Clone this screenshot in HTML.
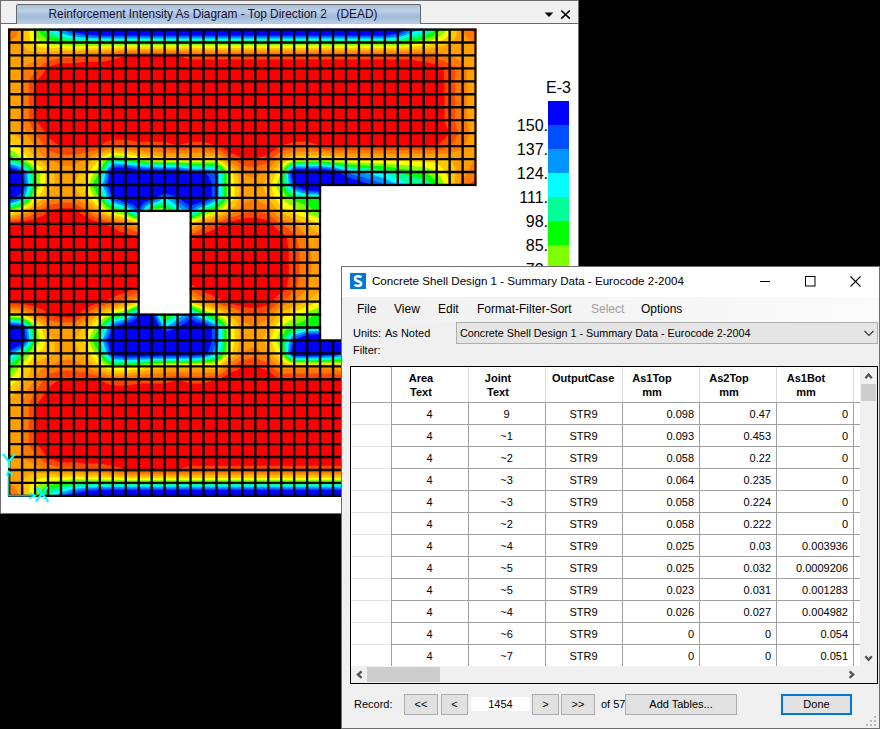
<!DOCTYPE html>
<html><head><meta charset="utf-8">
<style>
*{margin:0;padding:0;box-sizing:border-box}
html,body{width:880px;height:729px;overflow:hidden;background:#000;font-family:"Liberation Sans",sans-serif;}
.a{position:absolute;white-space:nowrap}
#w1{position:absolute;left:0;top:0;width:579px;height:514px;background:#fff;border:1px solid #6f6f6f;}
#tabbar{position:absolute;left:0;top:0;width:577px;height:23px;background:#f0f0f0;border-bottom:1px solid #6a6a6a}
#tab{position:absolute;left:15px;top:3px;width:405px;height:20px;border:1px solid #666;border-bottom:none;border-radius:2px 2px 0 0;
 background:linear-gradient(#a9c0dc 0px,#b7cbe4 4px,#bdd0e8 6px,#a7bedb 10px,#a3bbd9 12px,#b3c8e1 17px,#b6cbe3 19px)}
.tt{font-size:11.85px;color:#1a1030;letter-spacing:0}
.lg{position:absolute;right:332px;font-size:16px;color:#000;line-height:18px;white-space:nowrap}
.e3{position:absolute;left:546px;top:79px;font-size:16px;color:#000;line-height:18px}
#dlg{position:absolute;left:341px;top:266px;width:539px;height:463px;background:#f0f0f0;border:1px solid #6e6e6e;}
.t12{font-size:12px;color:#000}
.t11{font-size:11px;color:#000}
.btn{position:absolute;background:#e1e1e1;border:1px solid #adadad;font-size:12px;text-align:center;color:#000}
#tbl{position:absolute;left:350px;top:366px;width:528px;height:318px;border:1px solid #000;background:#fff;overflow:hidden}
.hc{position:absolute;top:0;height:35px;font-size:11px;font-weight:bold;text-align:center;line-height:14px;padding-top:4px}
.vl{position:absolute;width:1px;background:#a0a0a0}
.hl{position:absolute;height:1px;background:#a0a0a0}
.cell{position:absolute;font-size:11px;line-height:22px;height:22px;white-space:nowrap}
</style></head><body>
<div id="w1">
 <div id="tabbar"></div>
 <div id="tab"></div>
 <div class="a tt" style="left:47.5px;top:6px;line-height:14px">Reinforcement Intensity As Diagram - Top Direction 2&nbsp;&nbsp;&nbsp;(DEAD)</div>
 <svg class="a" style="left:540px;top:5px" width="36" height="16" viewBox="0 0 36 16">
  <path d="M3.7 6.4H12.3L8 10.9Z" fill="#000"/>
  <path d="M20.3 4.5L28.8 12.6M28.8 4.5L20.3 12.6" stroke="#000" stroke-width="1.6"/>
 </svg>
</div>
<svg style="position:absolute;left:7px;top:27px" width="472" height="472" viewBox="0 0 472 472">
<rect x="0" y="0" width="472" height="472" fill="#ff0000"/>
<path fill="#ff4600" fill-rule="evenodd" d="M0.2 0.2L0.2 196.2L4.2 196.2L4.5 195.8L14.2 194.8L25.5 192.5L32.8 190.2L36.2 188.5L38.8 186.5L41.5 183.5L53.2 181.2L67.2 181.2L71.2 183.5L72.8 185.8L75.2 187.8L84.5 192.8L87.2 193.8L99.2 196.5L102.8 199.5L109.2 202.8L113.8 204.8L122.8 207.8L130.2 209.5L157.5 209.5L163.5 212.2L164.5 212.2L169.5 213.8L183.8 213.8L187.5 211.8L190.2 209.5L192.2 208.8L196.8 206.2L200.5 205.2L208.2 201.8L208.8 201.2L212.5 199.5L216.2 196.5L217.2 196.5L223.2 194.5L224.8 194.5L226.5 193.8L229.2 193.5L230.5 192.8L233.8 192.2L234.8 191.5L248.8 190.2L261.5 193.5L265.8 196.8L268.2 200.5L270.8 203.2L274.2 205.2L279.5 209.8L280.5 216.5L281.8 221.5L281.8 249.8L279.5 261.5L275.5 265.2L270.5 268.5L268.2 270.8L265.8 274.5L261.5 277.8L248.8 281.2L234.8 279.8L231.5 278.5L223.2 276.8L216.2 274.8L211.8 271.5L202.2 266.8L199.5 266.2L197.5 265.2L196.5 265.2L193.5 263.2L190.2 261.8L187.5 259.5L183.8 257.5L169.8 257.5L161.8 259.8L157.8 261.8L130.5 261.8L125.5 263.2L124.2 263.2L111.5 267.5L102.8 271.8L99.2 274.8L94.2 275.8L92.8 276.5L89.8 276.8L84.5 278.5L80.2 281.2L75.2 283.5L71.2 287.8L67.2 290.2L52.8 290.2L41.2 287.8L37.2 283.5L31.8 280.8L28.5 280.2L24.2 278.5L15.8 276.8L0.2 276.2L0.2 471.8L471.8 471.8L471.8 0.2ZM442.8 365.2L437.5 377.5L437.5 418.2L437.2 418.5L436.5 429.8L429.8 433.5L416.5 436.8L409.8 437.5L404.2 438.8L182.8 438.8L174.8 441.2L170.8 443.2L118.5 443.2L114.5 441.2L109.2 439.5L105.2 438.8L103.5 438.2L93.2 436.8L92.8 436.5L77.2 436.5L76.8 436.2L70.8 435.8L70.5 435.5L54.2 435.5L41.2 431.5L40.2 430.8L33.8 421.5L29.2 417.2L29.2 378.2L36.8 368.2L40.8 361.5L46.5 356.5L53.8 352.2L92.8 352.2L97.2 355.5L104.8 358.5L120.5 358.5L120.8 358.2L127.2 357.5L130.8 356.5L157.8 356.5L166.2 354.2L170.2 352.2L174.2 353.8L183.2 356.5L196.8 356.5L205.8 353.8L209.2 352.2L215.8 350.2L219.5 348.2L222.5 345.5L223.5 345.5L229.2 343.5L233.2 341.2L235.5 339.2L248.5 339.2L251.8 340.8L261.2 343.5L265.5 347.5L268.5 349.5L274.2 352.2L279.8 351.8L280.2 351.5L284.5 351.5L284.8 351.2L327.8 351.2L328.2 351.5L336.8 351.8L337.2 352.2L429.8 352.2ZM29.2 54.2L33.8 49.8L36.2 46.8L39.8 40.8L41.2 39.8L53.2 36.2L66.8 36.2L67.2 35.8L70.8 35.8L71.2 35.5L74.2 35.5L74.5 35.2L77.5 35.2L77.8 34.8L93.2 34.8L93.5 34.5L97.8 34.2L108.2 32.2L115.5 29.8L118.8 28.2L170.5 28.2L173.8 29.8L182.8 32.5L404.2 32.5L409.5 33.8L417.8 34.8L430.5 38.2L436.5 41.5L437.2 53.2L437.5 53.5L437.5 93.8L440.5 101.5L442.8 106.2L429.8 119.2L312.8 119.2L308.5 117.2L300.2 114.8L287.2 114.8L278.8 117.2L272.5 119.8L266.5 123.2L261.2 127.8L252.8 130.2L248.5 132.2L235.2 132.2L232.2 129.5L227.5 127.2L222.5 125.8L218.8 122.8L214.8 120.8L209.8 119.5L208.2 118.5L201.8 116.2L196.5 114.8L183.5 114.8L178.2 116.2L173.5 117.8L171.8 118.8L170.2 119.2L166.8 117.5L157.8 114.8L130.5 114.8L126.8 113.8L120.5 113.2L120.2 112.8L105.2 112.8L98.5 115.2L95.2 117.2L92.8 119.2L53.5 119.2L47.8 115.8L40.8 109.8L37.5 104.2L29.2 93.2Z"/>
<path fill="#ff7800" fill-rule="evenodd" d="M5.5 0.2L5.5 2.8L3.8 5.2L2.2 6.8L0.2 6.8L0.2 193.8L3.8 193.8L4.2 193.5L11.2 192.5L22.8 189.2L37.2 181.2L40.8 178.5L53.8 175.8L66.8 175.8L79.8 183.5L82.8 186.8L88.2 190.2L100.2 194.2L112.2 196.5L124.2 202.8L130.8 205.2L136.5 204.8L144.2 203.2L158.2 203.2L163.2 205.2L170.5 207.2L183.8 207.5L190.2 204.5L193.8 202.2L196.5 199.8L199.2 198.8L203.2 196.5L207.5 195.8L216.2 193.5L222.8 190.8L226.2 190.2L230.8 188.5L235.5 186.2L240.8 185.5L247.2 183.8L249.5 183.8L261.2 186.8L265.2 190.5L269.2 193.5L276.2 197.8L282.5 202.8L289.5 209.8L292.5 222.8L292.5 248.5L289.5 261.5L280.2 270.5L267.8 278.8L261.2 284.5L249.5 287.5L247.2 287.5L243.8 286.5L235.5 285.2L229.8 282.5L223.8 280.5L222.8 280.5L213.8 277.2L203.2 274.8L196.5 271.5L194.2 269.5L189.5 266.5L183.5 263.8L169.5 264.5L164.5 265.8L158.2 268.2L143.8 268.2L133.8 266.2L129.8 266.5L123.5 268.8L112.2 274.8L109.2 275.2L107.5 275.8L99.2 277.5L89.8 280.5L85.2 282.8L82.5 284.8L79.8 287.8L66.8 295.5L53.5 295.5L41.8 293.2L35.2 288.8L32.5 287.8L29.8 285.8L21.8 281.8L15.2 279.8L0.2 279.2L0.2 464.5L2.2 464.5L5.5 468.5L5.5 471.8L464.2 471.8L464.2 468.8L464.5 468.2L467.8 464.8L468.5 464.5L471.8 464.5L471.8 320.2L468.5 320.2L461.8 313.5L467.2 312.5L471.8 312.5L471.8 158.8L466.8 158.8L466.5 158.5L463.8 158.5L462.2 157.8L468.8 151.2L471.8 151.2L471.8 6.8L468.2 6.8L464.5 3.2L464.2 0.2ZM451.5 365.2L449.5 373.2L447.8 377.8L447.8 429.8L446.5 431.5L442.8 434.5L437.5 437.2L429.2 440.2L414.8 443.5L408.2 443.8L407.8 444.2L182.2 444.2L181.8 444.5L177.5 444.5L177.2 444.8L172.8 444.8L172.5 445.2L116.8 445.2L116.5 444.8L107.5 444.5L107.2 444.2L103.2 444.2L102.8 443.8L99.2 443.8L98.8 443.5L95.2 443.5L94.8 443.2L79.5 443.2L77.8 442.5L67.5 440.5L53.2 440.5L41.5 437.5L36.2 434.5L31.5 429.8L28.2 425.5L24.2 421.8L21.8 417.5L21.8 377.8L22.8 375.2L26.8 366.8L32.8 358.8L36.5 352.2L40.8 347.8L53.5 343.5L67.5 343.5L73.2 344.8L79.8 345.5L84.5 347.5L89.2 348.5L93.2 348.8L94.5 349.5L105.5 352.2L119.8 352.2L120.2 351.8L132.2 350.8L132.5 350.5L155.8 350.2L156.2 349.8L159.5 349.8L159.8 349.5L168.2 348.8L168.5 348.5L172.8 348.5L173.2 348.8L175.8 348.8L176.2 349.2L178.5 349.2L181.5 349.8L199.2 349.8L199.5 349.5L207.5 349.2L210.8 348.5L216.8 345.2L220.2 342.2L222.5 339.2L229.2 336.8L235.8 332.5L240.2 332.2L248.5 330.5L254.2 333.5L261.2 335.8L268.5 343.2L273.8 346.8L279.8 346.8L280.2 346.5L327.5 346.5L329.5 347.2L335.5 347.8L335.8 348.2L338.2 348.2L338.5 348.5L430.8 348.5L431.2 348.8L432.8 348.8L436.8 349.8L442.8 352.2L446.8 356.8ZM21.8 53.8L24.5 49.2L28.8 45.2L31.5 41.5L35.8 37.2L41.5 33.8L53.5 30.8L67.8 30.8L79.8 28.2L95.5 28.2L95.8 27.8L99.2 27.8L99.5 27.5L117.5 26.5L117.8 26.2L171.8 26.2L172.2 26.5L176.5 26.5L176.8 26.8L181.2 26.8L181.5 27.2L407.5 27.2L407.8 27.5L414.5 27.8L430.2 31.5L435.8 33.5L442.2 36.5L444.2 37.8L447.8 41.5L447.8 93.5L451.5 106.2L448.8 111.5L446.8 114.5L442.5 119.5L437.2 121.5L431.2 122.8L331.2 122.8L330.8 122.5L311.2 122.2L310.8 121.8L306.5 121.8L306.2 121.5L302.5 121.5L302.2 121.2L286.2 121.2L278.8 122.8L272.8 125.2L268.2 128.5L261.2 135.5L253.5 138.2L248.5 140.8L239.8 139.2L235.5 138.8L233.8 137.2L230.2 134.8L222.5 132.2L219.8 128.8L217.2 126.5L214.2 124.5L209.8 122.5L202.8 122.2L202.5 121.8L199.2 121.8L198.8 121.5L181.8 121.5L181.5 121.8L173.5 122.5L173.2 122.8L167.8 122.8L167.5 122.5L164.8 122.5L164.5 122.2L162.2 122.2L159.2 121.5L154.5 121.5L154.2 121.2L131.5 120.8L131.2 120.5L119.5 119.5L119.2 119.2L105.5 119.2L96.5 121.2L93.2 122.5L89.5 122.8L83.5 124.2L79.8 125.8L73.5 126.5L67.8 127.8L53.5 127.8L40.8 123.5L36.5 119.2L33.8 114.2L27.8 106.2L23.5 97.8L21.8 93.5Z"/>
<path fill="#ffa000" fill-rule="evenodd" d="M12.2 0.2L11.8 3.5L9.5 8.2L7.8 10.5L2.5 15.5L0.2 15.5L0.2 191.5L3.5 191.5L10.8 189.8L20.2 186.5L25.5 183.5L28.5 181.2L35.8 177.2L41.2 173.2L52.8 170.8L67.2 170.8L79.5 178.2L85.8 184.5L89.2 186.8L93.2 188.8L105.5 192.8L117.8 195.2L122.8 196.5L131.2 200.8L132.8 200.8L136.8 199.8L143.2 197.5L144.8 196.5L157.5 196.5L162.8 199.2L170.2 201.8L183.5 203.2L186.8 201.5L193.5 196.5L196.2 195.5L201.8 194.5L210.5 192.2L226.8 185.8L230.8 183.8L232.2 182.5L234.8 177.8L235.8 176.8L247.8 170.8L248.5 170.8L252.5 174.5L257.2 177.5L260.8 179.2L264.8 184.2L272.2 190.2L274.8 191.8L287.2 196.5L289.5 198.5L300.2 209.5L302.8 219.5L304.2 222.8L304.2 248.5L303.2 250.8L300.2 261.8L287.2 274.8L274.2 279.8L267.2 285.2L263.8 288.5L261.2 292.2L259.8 292.5L254.5 295.5L248.5 300.5L247.8 300.5L235.8 294.5L234.8 293.5L234.2 291.8L230.8 287.5L227.5 285.8L222.5 284.2L219.5 282.5L212.5 279.8L194.2 275.2L187.8 270.5L183.5 268.2L170.5 269.5L162.2 272.5L157.5 274.8L144.8 274.8L141.5 273.2L135.5 271.2L131.2 270.5L124.8 273.5L123.2 274.8L103.2 279.2L92.5 282.8L88.2 285.2L85.5 287.2L79.5 293.2L67.2 300.5L52.8 300.5L41.2 298.2L38.2 295.2L34.5 292.5L16.8 283.5L14.5 282.8L0.2 281.8L0.2 455.8L2.5 455.8L7.8 460.8L9.8 463.8L12.2 468.8L12.2 471.8L455.5 471.8L455.5 468.5L457.2 464.5L458.5 462.5L462.2 458.8L464.2 457.5L468.2 455.8L471.8 455.8L471.8 339.5L468.5 339.5L466.2 336.8L463.5 331.8L461.8 326.2L455.2 319.5L452.8 313.8L453.2 313.2L456.2 312.2L468.2 311.2L468.5 310.8L471.8 310.8L471.8 160.5L467.8 160.5L467.5 160.2L455.8 159.2L452.8 157.8L453.8 154.5L455.2 151.8L461.8 145.2L463.5 139.5L466.2 134.5L468.5 131.8L471.8 131.8L471.8 15.5L467.8 15.5L463.5 13.5L460.8 11.5L458.2 8.5L455.5 3.2L455.5 0.2ZM462.2 364.5L461.5 370.5L459.5 377.8L459.5 430.2L450.8 439.2L448.8 440.5L442.2 443.5L435.8 445.2L430.5 445.5L430.2 445.8L425.8 445.8L425.5 446.2L404.2 446.5L403.8 446.8L403.5 446.5L178.8 446.5L178.5 446.8L173.2 446.8L172.8 447.2L116.5 447.2L116.2 446.8L105.2 446.5L104.8 446.2L100.2 446.2L99.8 445.8L95.5 445.8L95.2 445.5L77.8 445.5L77.5 445.2L73.8 445.2L73.5 444.8L69.8 444.8L69.5 444.5L51.5 444.5L51.2 444.2L48.2 444.2L47.8 443.8L40.5 443.2L35.2 441.5L31.8 439.8L27.8 436.5L22.8 435.2L18.8 433.2L14.8 429.8L14.8 378.2L19.2 365.2L27.8 352.5L29.2 348.8L30.5 346.5L33.8 342.8L38.8 339.8L45.8 337.5L49.8 335.5L53.8 332.8L67.2 332.8L70.5 335.2L75.2 337.5L79.8 339.2L82.2 341.2L86.8 343.8L105.2 349.2L120.8 349.2L121.2 348.8L133.2 347.8L133.5 347.5L137.2 347.5L137.5 347.2L140.8 347.2L144.2 346.5L152.8 346.2L153.2 345.8L157.2 345.8L157.5 345.5L161.5 345.5L161.8 345.2L166.2 345.2L166.5 344.8L174.8 344.8L175.2 345.2L179.5 345.2L179.8 345.5L209.8 345.5L213.8 343.2L222.8 335.2L226.8 333.5L230.8 330.8L237.2 324.5L239.2 323.2L244.2 320.8L248.5 319.8L255.2 326.5L260.8 329.2L268.2 336.8L274.2 341.8L279.8 341.8L280.2 341.5L326.2 341.5L331.2 343.2L338.8 344.8L435.2 344.8L435.5 345.2L442.8 345.5L450.2 347.2L453.5 349.2L458.5 355.5L460.8 360.2ZM433.5 261.2L433.8 260.8L434.2 261.2L433.8 261.5ZM355.5 260.8L355.8 260.5L356.2 260.8L355.8 261.2ZM459.8 260.2L460.2 259.8L460.5 260.2L460.2 260.5ZM342.5 260.2L342.8 259.8L343.2 260.2L342.8 260.5ZM393.8 259.8L394.2 259.5L394.5 259.8L394.2 260.2ZM369.5 259.8L369.8 259.5L370.2 259.8L369.8 260.2ZM368.2 259.8L368.5 259.5L368.8 259.8L368.5 260.2ZM446.2 259.5L446.5 259.2L446.8 259.5L446.5 259.8ZM393.5 259.5L393.8 259.2L394.2 259.5L393.8 259.8ZM380.5 259.5L380.8 259.2L381.2 259.5L380.8 259.8ZM367.5 259.5L367.8 259.2L368.2 259.5L367.8 259.8ZM354.5 259.5L354.8 259.2L355.2 259.5L354.8 259.8ZM459.5 259.2L459.8 258.8L460.2 259.2L459.8 259.5ZM420.8 259.2L421.2 258.8L421.5 259.2L421.2 259.5ZM405.8 259.2L406.2 258.8L406.5 259.2L406.2 259.5ZM382.2 259.2L382.5 258.8L382.8 259.2L382.5 259.5ZM460.2 258.8L460.5 258.5L460.8 258.8L460.5 259.2ZM458.8 258.8L459.2 258.5L459.5 258.8L459.2 259.2ZM457.5 258.8L457.8 258.5L458.2 258.8L457.8 259.2ZM420.5 258.8L420.8 258.5L421.2 258.8L420.8 259.2ZM419.2 258.8L419.5 258.5L419.8 258.8L419.5 259.2ZM406.5 258.8L406.8 258.5L407.2 258.8L406.8 259.2ZM395.8 258.8L396.2 258.5L396.5 258.8L396.2 259.2ZM367.5 258.8L367.8 258.5L368.2 258.8L367.8 259.2ZM356.2 258.8L356.5 258.5L356.8 258.8L356.5 259.2ZM354.8 258.8L355.2 258.5L355.5 258.8L355.2 259.2ZM340.8 258.8L341.2 258.5L341.5 258.8L341.2 259.2ZM458.5 258.5L458.8 258.2L459.2 258.5L458.8 258.8ZM457.2 258.5L457.5 258.2L457.8 258.5L457.5 258.8ZM431.2 258.5L431.5 258.2L431.8 258.5L431.5 258.8ZM419.8 258.5L420.2 258.2L420.5 258.5L420.2 258.8ZM407.5 258.5L407.8 258.2L408.2 258.5L407.8 258.8ZM406.8 258.5L407.2 258.2L407.5 258.5L407.2 258.8ZM383.2 258.5L383.5 258.2L383.8 258.5L383.5 258.8ZM380.2 258.5L380.5 258.2L380.8 258.5L380.5 258.8ZM354.2 258.5L354.5 258.2L354.8 258.5L354.5 258.8ZM341.2 258.5L341.5 258.2L341.8 258.5L341.5 258.8ZM327.5 258.5L327.8 258.2L328.2 258.5L327.8 258.8ZM458.2 258.2L458.5 257.8L458.8 258.2L458.5 258.5ZM444.2 258.2L444.5 257.8L444.8 258.2L444.5 258.5ZM434.5 258.2L434.8 257.8L435.2 258.2L434.8 258.5ZM420.5 258.2L420.8 257.8L421.2 258.2L420.8 258.5ZM418.8 258.2L419.2 257.8L419.5 258.2L419.2 258.5ZM395.2 258.2L395.5 257.8L395.8 258.2L395.5 258.5ZM392.2 258.2L392.5 257.8L392.8 258.2L392.5 258.5ZM368.5 258.2L368.8 257.8L369.2 258.2L368.8 258.5ZM366.8 258.2L367.2 257.8L367.5 258.2L367.2 258.5ZM355.8 258.2L356.2 257.8L356.5 258.2L356.2 258.5ZM354.5 258.2L354.8 257.8L355.2 258.2L354.8 258.5ZM352.8 258.2L353.2 257.8L353.5 258.2L353.2 258.5ZM459.2 257.8L459.5 257.5L459.8 257.8L459.5 258.2ZM457.8 257.8L458.2 257.5L458.5 257.8L458.2 258.2ZM456.5 257.8L456.8 257.5L457.2 257.8L456.8 258.2ZM430.2 257.8L430.5 257.5L430.8 257.8L430.5 258.2ZM422.2 257.8L422.5 257.5L422.8 257.8L422.5 258.2ZM394.5 257.8L394.8 257.5L395.2 257.8L394.8 258.2ZM393.8 257.8L394.2 257.5L394.5 257.8L394.2 258.2ZM393.2 257.8L393.5 257.5L393.8 257.8L393.5 258.2ZM391.8 257.8L392.2 257.5L392.5 257.8L392.2 258.2ZM365.5 257.8L365.8 257.5L366.2 257.8L365.8 258.2ZM330.5 257.8L330.8 257.5L331.2 257.8L330.8 258.2ZM329.8 257.8L330.2 257.5L330.5 257.8L330.2 258.2ZM329.2 257.8L329.5 257.5L329.8 258.2L329.5 258.5ZM327.8 257.8L328.2 257.5L328.5 257.8L328.2 258.2ZM446.8 257.5L447.2 257.2L447.5 257.5L447.2 257.8ZM445.2 257.5L445.5 257.2L445.8 257.5L445.5 257.8ZM443.5 257.5L443.8 257.2L444.2 257.5L443.8 257.8ZM435.2 257.5L435.5 257.2L435.8 257.5L435.5 257.8ZM430.8 257.5L431.2 257.2L431.5 257.5L431.2 257.8ZM408.5 257.5L408.8 257.2L409.2 257.5L408.8 257.8ZM407.2 257.5L407.5 257.2L407.8 257.5L407.5 257.8ZM405.5 257.5L405.8 257.2L406.2 257.5L405.8 257.8ZM391.2 257.5L391.5 257.2L391.8 257.5L391.5 257.8ZM383.5 257.5L383.8 257.2L384.2 257.5L383.8 257.8ZM370.5 257.5L370.8 257.2L371.2 257.5L370.8 257.8ZM367.5 257.5L367.8 257.2L368.2 257.5L367.8 257.8ZM354.5 257.5L354.8 257.2L355.2 257.5L354.8 257.8ZM329.5 257.5L329.8 257.2L330.2 257.5L329.8 257.8ZM446.5 257.2L446.8 256.8L447.2 257.2L446.8 257.5ZM442.8 257.2L443.2 256.8L443.5 257.2L443.2 257.5ZM432.5 257.2L432.8 256.8L433.2 257.2L432.8 257.5ZM430.2 257.2L430.5 256.8L430.8 257.2L430.5 257.5ZM416.8 257.2L417.2 256.8L417.5 257.2L417.2 257.5ZM395.5 257.2L395.8 256.8L396.2 257.2L395.8 257.5ZM392.5 257.2L392.8 256.8L393.2 257.2L392.8 257.5ZM379.2 257.2L379.5 256.8L379.8 257.2L379.5 257.5ZM378.5 257.2L378.8 256.8L379.2 257.2L378.8 257.5ZM355.5 257.2L355.8 256.8L356.2 257.2L355.8 257.5ZM344.5 257.2L344.8 256.8L345.2 257.2L344.8 257.5ZM342.2 257.2L342.5 256.8L342.8 257.2L342.5 257.5ZM341.5 257.2L341.8 256.8L342.2 257.2L341.8 257.5ZM459.5 256.8L459.8 256.5L460.2 256.8L459.8 257.2ZM458.2 256.8L458.5 256.5L458.8 256.8L458.5 257.2ZM456.8 256.8L457.2 256.5L457.5 257.2L457.2 257.5ZM455.5 256.8L455.8 256.5L456.2 256.8L455.8 257.2ZM442.5 256.8L442.8 256.5L443.2 256.8L442.8 257.2ZM434.5 256.8L434.8 256.5L435.2 256.8L434.8 257.2ZM433.2 256.8L433.5 256.5L433.8 256.8L433.5 257.2ZM431.8 256.8L432.2 256.5L432.5 256.8L432.2 257.2ZM430.5 256.8L430.8 256.5L431.2 256.8L430.8 257.2ZM417.5 256.8L417.8 256.5L418.2 256.8L417.8 257.2ZM405.5 256.8L405.8 256.5L406.2 256.8L405.8 257.2ZM404.2 256.8L404.5 256.5L404.8 256.8L404.5 257.2ZM395.8 256.8L396.2 256.5L396.5 256.8L396.2 257.2ZM391.2 256.8L391.5 256.5L391.8 256.8L391.5 257.2ZM380.5 256.8L380.8 256.5L381.2 256.8L380.8 257.2ZM366.8 256.8L367.2 256.5L367.5 256.8L367.2 257.2ZM366.2 256.8L366.5 256.5L366.8 256.8L366.5 257.2ZM343.2 256.8L343.5 256.5L343.8 256.8L343.5 257.2ZM341.8 256.8L342.2 256.5L342.5 256.8L342.2 257.2ZM341.2 256.8L341.5 256.5L341.8 256.8L341.5 257.2ZM328.8 256.8L329.2 256.5L329.5 256.8L329.2 257.2ZM457.5 256.5L457.8 256.2L458.2 256.5L457.8 256.8ZM443.2 256.5L443.5 256.2L443.8 256.5L443.5 256.8ZM434.8 256.5L435.2 256.2L435.5 256.5L435.2 256.8ZM418.8 256.5L419.2 256.2L419.5 256.5L419.2 256.8ZM406.5 256.5L406.8 256.2L407.2 256.5L406.8 256.8ZM390.5 256.5L390.8 256.2L391.2 256.5L390.8 256.8ZM380.2 256.5L380.5 256.2L380.8 256.5L380.5 256.8ZM368.8 256.5L369.2 256.2L369.5 256.5L369.2 256.8ZM365.8 256.5L366.2 256.2L366.5 256.5L366.2 256.8ZM364.8 256.5L365.2 256.2L365.5 256.8L365.2 257.2ZM352.8 256.5L353.2 256.2L353.5 256.5L353.2 256.8ZM343.5 256.5L343.8 256.2L344.2 256.5L343.8 256.8ZM340.5 256.5L340.8 256.2L341.2 256.5L340.8 256.8ZM329.2 256.5L329.5 256.2L329.8 256.5L329.5 256.8ZM326.2 256.5L326.5 256.2L326.8 256.5L326.5 256.8ZM447.5 256.2L447.8 255.8L448.2 256.2L447.8 256.5ZM444.5 256.2L444.8 255.8L445.2 256.2L444.8 256.5ZM434.2 256.2L434.5 255.8L434.8 256.2L434.5 256.5ZM430.5 256.2L430.8 255.8L431.2 256.2L430.8 256.5ZM420.2 256.2L420.5 255.8L420.8 256.2L420.5 256.5ZM417.2 256.2L417.5 255.8L417.8 256.2L417.5 256.5ZM406.8 256.2L407.2 255.8L407.5 256.2L407.2 256.5ZM403.8 256.2L404.2 255.8L404.5 256.2L404.2 256.5ZM392.8 256.2L393.2 255.8L393.5 256.2L393.2 256.5ZM382.5 256.2L382.8 255.8L383.2 256.2L382.8 256.5ZM368.5 256.2L368.8 255.8L369.2 256.2L368.8 256.5ZM365.5 256.2L365.8 255.8L366.2 256.2L365.8 256.5ZM355.2 256.2L355.5 255.8L355.8 256.2L355.5 256.5ZM352.2 256.2L352.5 255.8L352.8 256.2L352.5 256.5ZM341.8 256.2L342.2 255.8L342.5 256.2L342.2 256.5ZM341.2 256.2L341.5 255.8L341.8 256.2L341.5 256.5ZM327.8 256.2L328.2 255.8L328.5 256.2L328.2 256.5ZM458.8 255.8L459.2 255.5L459.5 255.8L459.2 256.2ZM457.8 255.8L458.2 255.5L458.5 255.8L458.2 256.2ZM445.8 255.8L446.2 255.5L446.5 255.8L446.2 256.2ZM444.8 255.8L445.2 255.5L445.5 255.8L445.2 256.2ZM434.5 255.8L434.8 255.5L435.2 255.8L434.8 256.2ZM421.5 255.8L421.8 255.5L422.2 255.8L421.8 256.2ZM416.5 255.8L416.8 255.5L417.2 256.2L416.8 256.5ZM406.5 255.8L406.8 255.5L407.2 255.8L406.8 256.2ZM403.5 255.8L403.8 255.5L404.2 255.8L403.8 256.2ZM394.2 255.8L394.5 255.5L394.8 255.8L394.5 256.2ZM391.2 255.8L391.5 255.5L392.2 255.8L391.8 256.2ZM368.8 255.8L369.2 255.5L369.5 255.8L369.2 256.2ZM365.8 255.8L366.2 255.5L366.5 255.8L366.2 256.2ZM353.8 255.8L354.2 255.5L354.5 255.8L354.2 256.2ZM342.5 255.8L342.8 255.5L343.2 255.8L342.8 256.2ZM329.5 255.8L329.8 255.5L330.2 255.8L329.8 256.2ZM446.5 255.5L446.8 255.2L447.2 255.5L446.8 255.8ZM445.2 255.5L445.5 255.2L445.8 255.5L445.5 255.8ZM443.8 255.5L444.2 255.2L444.5 255.5L444.2 255.8ZM442.8 255.5L443.2 255.2L443.5 255.5L443.2 255.8ZM420.5 255.5L420.8 255.2L421.2 255.5L420.8 255.8ZM419.2 255.5L419.5 255.2L419.8 255.5L419.5 255.8ZM403.8 255.5L404.2 255.2L404.5 255.5L404.2 255.8ZM392.2 255.5L392.5 255.2L392.8 255.5L392.5 255.8ZM390.8 255.5L391.2 255.2L391.5 255.5L391.2 255.8ZM380.2 255.5L380.5 255.2L380.8 255.5L380.5 255.8ZM368.5 255.5L368.8 255.2L369.2 255.5L368.8 255.8ZM367.2 255.5L367.5 255.2L367.8 255.5L367.5 255.8ZM338.8 255.5L339.2 255.2L339.5 255.5L339.2 255.8ZM327.2 255.5L327.5 255.2L327.8 255.5L327.5 255.8ZM325.8 255.5L326.2 255.2L326.5 255.5L326.2 255.8ZM459.5 255.2L459.8 254.8L460.2 255.2L459.8 255.5ZM444.2 255.2L444.5 254.8L444.8 255.2L444.5 255.5ZM432.8 255.2L433.2 254.8L433.5 255.2L433.2 255.5ZM430.2 255.2L430.5 254.8L430.8 255.2L430.5 255.5ZM417.5 255.2L417.8 254.8L418.2 255.2L417.8 255.5ZM406.5 255.2L406.8 254.8L407.2 255.2L406.8 255.5ZM393.8 255.2L394.2 254.8L394.5 255.2L394.2 255.5ZM392.5 255.2L392.8 254.8L393.2 255.2L392.8 255.5ZM379.8 255.2L380.2 254.8L380.5 255.2L380.2 255.5ZM378.5 255.2L378.8 254.8L379.2 255.2L378.8 255.5ZM365.8 255.2L366.2 254.8L366.5 255.2L366.2 255.5ZM354.8 255.2L355.2 254.8L355.5 255.2L355.2 255.5ZM353.5 255.2L353.8 254.8L354.2 255.2L353.8 255.5ZM342.2 255.2L342.5 254.8L342.8 255.2L342.5 255.5ZM340.8 255.2L341.2 254.8L341.5 255.2L341.2 255.5ZM339.5 255.2L339.8 254.8L340.2 255.2L339.8 255.5ZM326.8 255.2L327.2 254.8L327.5 255.2L327.2 255.5ZM458.5 254.8L458.8 254.5L459.2 254.8L458.8 255.2ZM445.5 254.8L445.8 254.5L446.2 255.2L445.8 255.5ZM443.8 254.8L444.2 254.5L444.5 254.8L444.2 255.2ZM432.5 254.8L432.8 254.5L433.2 254.8L432.8 255.2ZM430.8 254.8L431.2 254.5L431.5 254.8L431.2 255.2ZM418.8 254.8L419.2 254.5L419.5 254.8L419.2 255.2ZM417.8 254.8L418.2 254.5L418.5 254.8L418.2 255.2ZM405.8 254.8L406.2 254.5L406.5 254.8L406.2 255.2ZM404.5 254.8L404.8 254.5L405.2 254.8L404.8 255.2ZM390.8 254.8L391.2 254.5L391.5 254.8L391.2 255.2ZM379.5 254.8L379.8 254.5L380.2 254.8L379.8 255.2ZM377.8 254.8L378.2 254.5L378.5 254.8L378.2 255.2ZM455.5 254.5L455.8 254.2L456.2 254.5L455.8 254.8ZM433.2 254.5L433.5 254.2L433.8 254.5L433.5 254.8ZM429.5 254.5L429.8 254.2L430.2 254.5L429.8 254.8ZM419.5 254.5L419.8 254.2L420.2 254.5L419.8 254.8ZM418.2 254.5L418.5 254.2L418.8 254.5L418.5 254.8ZM406.5 254.5L406.8 254.2L407.2 254.5L406.8 254.8ZM405.2 254.5L405.5 254.2L405.8 254.5L405.5 254.8ZM393.8 254.5L394.2 254.2L394.5 254.5L394.2 254.8ZM380.8 254.5L381.2 254.2L381.5 254.5L381.2 254.8ZM366.5 254.5L366.8 254.2L367.2 254.8L366.8 255.2ZM365.8 254.5L366.2 254.2L366.5 254.5L366.2 254.8ZM353.5 254.5L353.8 254.2L354.2 254.5L353.8 254.8ZM352.8 254.5L353.2 254.2L353.5 254.5L353.2 254.8ZM329.2 254.5L329.5 254.2L329.8 254.8L329.5 255.2ZM457.5 253.8L457.8 254.2L457.2 255.2L456.8 254.2ZM447.2 254.2L447.5 253.8L447.8 254.2L447.5 254.5ZM442.5 254.2L442.8 253.8L443.2 254.2L442.8 254.5ZM404.5 254.2L404.8 253.8L405.2 254.2L404.8 254.5ZM395.2 254.2L395.5 253.8L395.8 254.2L395.5 254.5ZM390.8 254.2L391.2 253.8L391.5 254.2L391.2 254.5ZM367.2 254.2L367.5 253.8L367.8 254.2L367.5 254.5ZM352.5 254.2L352.8 253.8L353.2 254.2L352.8 254.5ZM418.5 253.8L418.8 253.5L419.5 254.2L418.8 254.5ZM395.5 253.8L395.8 253.5L396.2 253.8L395.8 254.2ZM391.2 253.8L391.5 253.5L391.8 253.8L391.5 254.2ZM381.8 253.8L382.2 253.5L382.5 253.8L382.2 254.2ZM366.2 253.8L366.5 253.5L366.8 253.8L366.5 254.2ZM353.2 253.8L353.5 253.5L353.8 254.2L353.5 254.5ZM338.8 253.8L339.2 253.5L339.5 253.8L339.2 254.2ZM328.2 253.8L328.5 253.5L328.8 253.8L328.5 254.2ZM460.8 253.5L461.2 253.2L461.5 253.5L461.2 253.8ZM455.8 253.5L456.2 253.2L456.5 253.5L456.2 253.8ZM443.5 253.5L443.8 253.2L444.2 253.8L443.8 254.2ZM417.5 253.5L417.8 253.2L418.2 253.5L417.8 253.8ZM407.5 253.5L407.8 253.2L408.2 253.5L407.8 253.8ZM403.8 253.5L404.2 253.2L404.5 253.5L404.2 253.8ZM380.2 253.5L380.5 253.2L380.8 253.5L380.5 253.8ZM367.2 253.5L367.5 253.2L367.8 253.5L367.5 253.8ZM340.5 253.5L340.8 253.2L341.2 253.5L340.8 253.8ZM339.8 253.5L340.2 253.2L340.5 253.5L340.2 253.8ZM331.2 253.5L331.5 253.2L331.8 253.5L331.5 253.8ZM326.8 253.5L327.2 253.2L327.5 253.5L327.2 253.8ZM434.8 253.2L435.2 252.8L435.5 253.2L435.2 253.5ZM430.2 252.8L430.5 253.2L430.2 254.2L429.8 253.8ZM406.2 253.2L406.5 252.8L406.8 253.2L406.5 253.5ZM379.2 253.2L379.5 252.8L379.8 253.2L379.5 253.5ZM378.2 253.2L378.5 252.8L378.8 253.2L378.5 253.5ZM369.8 253.2L370.2 252.8L370.5 253.2L370.2 253.5ZM364.8 253.2L365.2 252.8L365.5 253.2L365.2 253.5ZM355.5 253.2L355.8 252.8L356.2 253.2L355.8 253.5ZM341.2 253.2L341.5 252.8L341.8 253.2L341.5 253.5ZM327.5 253.2L327.8 252.8L328.2 253.2L327.8 253.5ZM460.8 252.8L461.2 252.5L461.5 252.8L461.2 253.2ZM457.8 252.8L458.2 252.5L458.5 252.8L458.2 253.2ZM421.5 252.8L421.8 252.5L422.2 252.8L421.8 253.2ZM407.2 252.8L407.5 252.5L407.8 252.8L407.5 253.2ZM377.8 252.8L378.2 252.5L378.5 252.8L378.2 253.2ZM367.8 252.8L368.2 252.5L368.5 252.8L368.2 253.2ZM357.8 252.8L358.2 252.5L358.5 252.8L358.2 253.2ZM341.5 252.8L341.8 252.5L342.2 252.8L341.8 253.2ZM331.5 252.8L331.8 252.5L332.2 252.8L331.8 253.2ZM327.2 252.8L327.5 252.5L327.8 252.8L327.5 253.2ZM326.5 252.8L326.8 252.5L327.2 252.8L326.8 253.2ZM447.5 252.5L447.8 252.2L448.2 252.5L447.8 252.8ZM405.5 252.5L405.8 252.2L406.2 252.5L405.8 252.8ZM393.8 252.5L394.2 252.2L394.5 252.5L394.2 252.8ZM353.5 252.5L353.8 252.2L354.2 252.5L353.8 252.8ZM341.8 252.5L342.2 252.2L342.5 252.5L342.2 252.8ZM341.2 252.5L341.5 252.2L341.8 252.5L341.5 252.8ZM459.8 252.2L460.2 251.8L460.5 252.2L460.2 252.5ZM455.8 252.2L456.2 251.8L456.5 252.2L456.2 252.5ZM431.2 252.2L431.5 251.8L431.8 252.2L431.5 252.5ZM403.5 252.2L403.8 251.8L404.2 252.2L403.8 252.5ZM394.5 252.2L394.8 251.8L395.2 252.2L394.8 252.5ZM381.2 252.2L381.5 251.8L381.8 252.2L381.5 252.5ZM367.8 252.2L368.2 251.8L368.5 252.2L368.2 252.5ZM352.5 252.2L352.8 251.8L353.2 252.2L352.8 252.5ZM339.2 252.2L339.5 251.8L339.8 252.2L339.5 252.5ZM330.2 252.2L330.5 251.8L330.8 252.2L330.5 252.5ZM458.8 251.8L459.2 251.5L459.5 252.2L459.2 252.5ZM443.8 251.8L444.2 251.5L444.5 251.8L444.2 252.2ZM433.2 251.8L433.5 251.5L433.8 251.8L433.5 252.2ZM418.2 251.8L418.5 251.5L418.8 251.8L418.5 252.2ZM407.5 251.8L407.8 251.5L408.2 251.8L407.8 252.2ZM392.5 251.8L392.8 251.5L393.2 251.8L392.8 252.2ZM341.2 251.8L341.5 251.5L341.8 251.8L341.5 252.2ZM326.2 251.8L326.5 251.5L326.8 251.8L326.5 252.2ZM431.8 251.5L432.2 251.2L432.5 251.5L432.2 251.8ZM430.8 251.5L431.2 251.2L431.5 251.5L431.2 251.8ZM403.5 251.5L403.8 251.2L404.2 251.5L403.8 251.8ZM390.5 251.5L390.8 251.2L391.2 251.5L390.8 251.8ZM380.2 251.5L380.5 251.2L380.8 251.5L380.5 251.8ZM378.2 251.5L378.5 251.2L378.8 251.5L378.5 251.8ZM367.2 251.5L367.5 251.2L367.8 251.5L367.5 251.8ZM405.2 251.2L405.5 250.8L405.8 251.2L405.5 251.5ZM392.2 251.2L392.5 250.8L392.8 251.2L392.5 251.5ZM379.2 251.2L379.5 250.8L379.8 251.2L379.5 251.5ZM364.8 251.2L365.2 250.8L365.5 251.2L365.2 251.5ZM352.2 250.8L352.5 251.2L352.2 252.2L351.8 251.8ZM338.8 251.2L339.2 250.8L339.5 251.2L339.2 251.5ZM456.2 250.8L456.5 250.5L456.8 250.8L456.5 251.2ZM403.5 250.8L403.8 250.5L404.2 250.8L403.8 251.2ZM330.2 250.8L330.5 250.5L330.8 250.8L330.5 251.2ZM418.8 250.5L419.2 250.2L419.5 250.5L419.2 250.8ZM407.8 250.5L408.2 250.2L408.5 250.5L408.2 250.8ZM404.8 250.5L405.2 250.2L405.5 250.5L405.2 250.8ZM393.8 250.5L394.2 250.2L394.5 250.5L394.2 250.8ZM391.5 250.5L391.8 250.2L392.2 250.5L391.8 250.8ZM380.5 250.5L380.8 250.2L381.2 250.5L380.8 250.8ZM456.8 250.2L457.2 249.8L457.5 250.2L457.2 250.5ZM430.2 249.8L430.5 250.2L430.2 251.2L429.8 250.8ZM379.5 250.2L379.8 249.8L380.2 250.2L379.8 250.5ZM352.5 250.2L352.8 249.8L353.2 250.2L352.8 250.5ZM442.8 249.8L443.2 249.5L443.5 249.8L443.2 250.2ZM403.8 249.8L404.2 249.5L404.5 249.8L404.2 250.2ZM378.2 249.8L378.5 249.5L378.8 249.8L378.5 250.2ZM380.2 249.5L380.5 249.2L380.8 249.5L380.5 249.8ZM443.8 248.8L444.2 248.5L444.5 248.8L444.2 249.2ZM407.8 248.2L408.2 247.8L408.5 248.2L408.2 248.5ZM381.8 247.8L382.2 247.5L382.5 247.8L382.2 248.2ZM356.2 247.8L356.5 247.5L356.8 247.8L356.5 248.2ZM381.5 247.5L381.8 247.2L382.2 247.5L381.8 247.8ZM368.8 247.5L369.2 247.2L369.5 247.5L369.2 247.8ZM343.2 247.5L343.5 247.2L343.8 247.5L343.5 247.8ZM395.2 247.2L395.5 246.8L395.8 247.2L395.5 247.5ZM393.8 247.2L394.2 246.8L394.5 247.2L394.2 247.5ZM330.2 247.2L330.5 246.8L330.8 247.2L330.5 247.5ZM459.8 246.8L460.2 246.5L460.5 246.8L460.2 247.2ZM446.5 246.8L446.8 246.5L447.2 246.8L446.8 247.2ZM434.2 246.8L434.5 246.5L434.8 246.8L434.5 247.2ZM406.8 246.8L407.2 246.5L407.5 246.8L407.2 247.2ZM343.5 246.8L343.8 246.5L344.2 246.8L343.8 247.2ZM446.2 246.5L446.5 246.2L446.8 246.5L446.5 246.8ZM433.2 246.5L433.5 246.2L433.8 246.5L433.5 246.8ZM393.8 246.5L394.2 246.2L394.5 246.5L394.2 246.8ZM367.5 246.5L367.8 246.2L368.2 246.5L367.8 246.8ZM354.5 246.5L354.8 246.2L355.2 246.5L354.8 246.8ZM434.5 246.2L434.8 245.8L435.2 246.2L434.8 246.5ZM393.2 246.2L393.5 245.8L393.8 246.2L393.5 246.5ZM381.2 246.2L381.5 245.8L381.8 246.2L381.5 246.5ZM355.2 246.2L355.5 245.8L355.8 246.2L355.5 246.5ZM343.2 246.2L343.5 245.8L343.8 246.2L343.5 246.5ZM433.5 245.8L433.8 245.5L434.2 246.2L433.8 246.5ZM432.5 245.8L432.8 245.5L433.2 245.8L432.8 246.2ZM420.2 245.8L420.5 245.5L420.8 245.8L420.5 246.2ZM419.2 245.8L419.5 245.5L419.8 245.8L419.5 246.2ZM368.5 245.8L368.8 245.5L369.2 245.8L368.8 246.2ZM367.8 245.8L368.2 245.5L368.5 245.8L368.2 246.2ZM460.2 245.5L460.5 245.2L460.8 245.5L460.5 245.8ZM447.2 245.5L447.5 245.2L447.8 245.5L447.5 245.8ZM395.2 245.5L395.5 245.2L395.8 245.5L395.5 245.8ZM379.2 245.5L379.5 245.2L379.8 245.5L379.5 245.8ZM369.2 245.5L369.5 245.2L369.8 245.5L369.5 245.8ZM330.2 245.5L330.5 245.2L330.8 245.5L330.5 245.8ZM460.8 245.2L461.2 244.8L461.5 245.2L461.2 245.5ZM456.8 245.2L457.2 244.8L457.8 245.5L457.2 245.8ZM444.8 245.2L445.2 244.8L445.5 245.2L445.2 245.5ZM432.5 245.2L432.8 244.8L433.2 245.2L432.8 245.5ZM421.5 245.2L421.8 244.8L422.2 245.2L421.8 245.5ZM408.8 245.2L409.2 244.8L409.5 245.2L409.2 245.5ZM404.8 245.2L405.2 244.8L405.5 245.2L405.2 245.5ZM393.2 245.2L393.5 244.8L393.8 245.2L393.5 245.5ZM381.5 245.2L381.8 244.8L382.2 245.2L381.8 245.5ZM378.8 245.2L379.2 244.8L379.5 245.2L379.2 245.5ZM367.8 245.2L368.2 244.8L368.5 245.2L368.2 245.5ZM356.2 245.2L356.5 244.8L356.8 245.2L356.5 245.5ZM344.5 245.2L344.8 244.8L345.2 245.2L344.8 245.5ZM340.5 245.2L340.8 244.8L341.2 245.2L340.8 245.5ZM327.8 245.2L328.2 244.8L328.5 245.2L328.2 245.5ZM457.2 244.8L457.5 244.5L457.8 244.8L457.5 245.2ZM446.2 244.8L446.5 244.5L446.8 244.8L446.5 245.2ZM443.8 244.8L444.2 244.5L444.5 244.8L444.2 245.2ZM419.5 244.8L419.8 244.5L420.2 244.8L419.8 245.2ZM404.5 244.8L404.8 244.5L405.2 244.8L404.8 245.2ZM378.5 244.8L378.8 244.5L379.2 244.8L378.8 245.2ZM355.2 244.8L355.5 244.5L355.8 244.8L355.5 245.2ZM340.2 244.8L340.5 244.5L340.8 244.8L340.5 245.2ZM331.8 244.8L332.2 244.5L332.5 244.8L332.2 245.2ZM460.8 244.5L461.2 244.2L461.5 244.5L461.2 244.8ZM445.2 244.5L445.5 244.2L445.8 244.5L445.5 244.8ZM435.5 244.5L435.8 244.2L436.2 244.5L435.8 244.8ZM431.5 244.5L431.8 244.2L432.5 244.5L432.2 244.8ZM419.8 244.5L420.2 244.2L420.5 244.5L420.2 244.8ZM406.2 244.5L406.5 244.2L406.8 244.8L406.5 245.2ZM396.5 244.5L396.8 244.2L397.2 244.5L396.8 244.8ZM383.8 244.5L384.2 244.2L384.5 244.5L384.2 244.8ZM367.5 244.5L367.8 244.2L368.2 244.5L367.8 244.8ZM354.8 244.5L355.2 244.2L355.5 244.5L355.2 244.8ZM342.2 244.5L342.5 244.2L342.8 244.5L342.5 244.8ZM446.2 244.2L446.5 243.8L446.8 244.2L446.5 244.5ZM435.2 244.2L435.5 243.8L435.8 244.2L435.5 244.5ZM431.2 244.2L431.5 243.8L431.8 244.2L431.5 244.5ZM420.2 244.2L420.5 243.8L420.8 244.2L420.5 244.5ZM409.2 244.2L409.5 243.8L409.8 244.2L409.5 244.5ZM408.5 244.2L408.8 243.8L409.2 244.2L408.8 244.5ZM404.5 244.2L404.8 243.8L405.2 244.2L404.8 244.5ZM393.5 244.2L393.8 243.8L394.5 244.5L393.8 244.8ZM382.5 244.2L382.8 243.8L383.2 244.2L382.8 244.5ZM355.8 244.2L356.2 243.8L356.5 244.2L356.2 244.5ZM351.8 244.2L352.2 243.8L352.5 244.2L352.2 244.5ZM340.8 244.2L341.2 243.8L341.5 244.2L341.2 244.5ZM340.2 244.2L340.5 243.8L340.8 244.2L340.5 244.5ZM331.5 244.2L331.8 243.8L332.2 244.2L331.8 244.5ZM329.8 244.2L330.2 243.8L330.5 244.2L330.2 244.5ZM327.5 244.2L327.8 243.8L328.2 244.2L327.8 244.5ZM460.8 243.8L461.2 243.5L461.5 243.8L461.2 244.2ZM458.5 243.8L458.8 243.5L459.2 243.8L458.8 244.2ZM457.5 243.8L457.8 243.5L458.2 243.8L457.8 244.2ZM447.5 243.8L447.8 243.5L448.2 243.8L447.8 244.2ZM444.2 243.8L444.5 243.5L444.8 243.8L444.5 244.2ZM433.2 243.8L433.5 243.5L433.8 243.8L433.5 244.2ZM418.8 243.8L419.2 243.5L419.5 243.8L419.2 244.2ZM405.5 243.8L405.8 243.5L406.2 243.8L405.8 244.2ZM394.5 243.8L394.8 243.5L395.2 243.8L394.8 244.2ZM392.8 243.8L393.2 243.5L393.5 243.8L393.2 244.2ZM391.2 243.8L391.5 243.5L391.8 243.8L391.5 244.2ZM390.5 243.8L390.8 243.5L391.2 243.8L390.8 244.2ZM379.5 243.8L379.8 243.5L380.2 243.8L379.8 244.2ZM368.5 243.8L368.8 243.5L369.2 243.8L368.8 244.2ZM365.2 243.8L365.5 243.5L365.8 244.2L365.5 244.5ZM353.5 243.8L353.8 243.5L354.2 244.2L353.8 244.5ZM342.5 243.8L342.8 243.5L343.2 243.8L342.8 244.2ZM339.2 243.8L339.5 243.5L339.8 243.8L339.5 244.2ZM455.5 243.5L455.8 243.2L456.2 243.5L455.8 243.8ZM446.8 243.5L447.2 243.2L447.5 243.5L447.2 243.8ZM433.5 243.5L433.8 243.2L434.2 243.5L433.8 243.8ZM421.2 243.5L421.5 243.2L421.8 243.5L421.5 243.8ZM417.5 243.5L417.8 243.2L418.2 243.5L417.8 243.8ZM416.5 243.5L416.8 243.2L417.2 243.8L416.8 244.2ZM407.8 243.5L408.2 243.2L408.5 243.5L408.2 243.8ZM404.8 243.5L405.2 243.2L405.5 243.5L405.2 243.8ZM404.2 243.5L404.5 243.2L404.8 243.5L404.5 243.8ZM391.8 243.5L392.2 243.2L392.5 243.5L392.2 243.8ZM382.2 243.5L382.5 243.2L382.8 243.5L382.5 243.8ZM381.5 243.5L381.8 243.2L382.2 243.5L381.8 243.8ZM379.2 243.5L379.5 243.2L379.8 243.5L379.5 243.8ZM378.5 243.5L378.8 243.2L379.2 243.5L378.8 243.8ZM366.8 243.5L367.2 243.2L367.5 243.5L367.2 243.8ZM356.5 243.5L356.8 243.2L357.2 243.5L356.8 243.8ZM340.2 243.5L340.5 243.2L340.8 243.5L340.5 243.8ZM327.8 243.5L328.2 243.2L328.5 243.5L328.2 243.8ZM460.5 243.2L460.8 242.8L461.2 243.2L460.8 243.5ZM456.5 243.2L456.8 242.8L457.2 243.2L456.8 243.5ZM443.5 242.8L443.8 243.2L443.5 244.2L443.2 243.8ZM432.2 243.2L432.5 242.8L432.8 243.2L432.5 243.5ZM431.5 243.2L431.8 242.8L432.2 243.2L431.8 243.5ZM430.2 242.8L430.5 243.2L430.2 244.2L429.8 243.8ZM420.5 243.2L420.8 242.8L421.2 243.2L420.8 243.5ZM378.2 243.2L378.5 242.8L378.8 243.2L378.5 243.5ZM364.8 243.2L365.2 242.8L365.5 243.2L365.2 243.5ZM353.8 243.2L354.2 242.8L354.5 243.2L354.2 243.5ZM458.8 242.8L459.2 242.5L459.5 243.2L459.2 243.5ZM418.2 242.8L418.5 242.5L418.8 242.8L418.5 243.2ZM407.2 242.8L407.5 242.5L407.8 242.8L407.5 243.2ZM406.5 242.8L406.8 242.5L407.2 242.8L406.8 243.2ZM403.8 242.8L404.2 242.5L404.5 242.8L404.2 243.2ZM395.5 242.8L395.8 242.5L396.2 242.8L395.8 243.2ZM392.2 242.8L392.5 242.5L392.8 242.8L392.5 243.2ZM391.5 242.8L391.8 242.5L392.2 243.2L391.8 243.5ZM381.2 242.8L381.5 242.5L381.8 242.8L381.5 243.2ZM380.5 242.8L380.8 242.5L381.2 242.8L380.8 243.2ZM338.8 242.8L339.2 242.5L339.5 242.8L339.2 243.2ZM327.2 242.8L327.5 242.5L327.8 242.8L327.5 243.2ZM326.5 242.8L326.8 242.5L327.2 243.2L326.8 243.5ZM458.5 242.5L458.8 242.2L459.2 242.5L458.8 242.8ZM457.2 242.5L457.5 242.2L457.8 242.5L457.5 242.8ZM446.2 242.5L446.5 242.2L446.8 242.5L446.5 242.8ZM444.8 242.5L445.2 242.2L445.5 242.5L445.2 242.8ZM433.8 242.5L434.2 242.2L434.5 242.5L434.2 242.8ZM420.5 242.5L420.8 242.2L421.2 242.5L420.8 242.8ZM405.2 242.5L405.5 242.2L405.8 242.5L405.5 242.8ZM393.8 242.5L394.2 242.2L394.5 242.5L394.2 242.8ZM377.8 242.5L378.2 242.2L378.5 242.5L378.2 242.8ZM367.5 242.5L367.8 242.2L368.2 242.5L367.8 242.8ZM355.2 242.5L355.5 242.2L355.8 242.5L355.5 242.8ZM352.2 242.5L352.5 242.2L352.8 242.5L352.5 242.8ZM342.8 242.5L343.2 242.2L343.5 242.5L343.2 242.8ZM339.8 242.5L340.2 242.2L340.5 242.5L340.2 242.8ZM339.2 242.5L339.5 242.2L339.8 242.5L339.5 242.8ZM329.5 242.5L329.8 242.2L330.2 242.5L329.8 242.8ZM326.8 242.5L327.2 242.2L327.5 242.5L327.2 242.8ZM457.5 242.2L457.8 241.8L458.2 242.2L457.8 242.5ZM446.5 242.2L446.8 241.8L447.2 242.2L446.8 242.5ZM444.2 242.2L444.5 241.8L444.8 242.2L444.5 242.5ZM432.5 242.2L432.8 241.8L433.2 242.2L432.8 242.5ZM419.2 242.2L419.5 241.8L419.8 242.2L419.5 242.5ZM416.8 242.2L417.2 241.8L417.5 242.2L417.2 242.5ZM403.5 242.2L403.8 241.8L404.2 242.2L403.8 242.5ZM394.2 242.2L394.5 241.8L394.8 242.2L394.5 242.5ZM391.8 242.2L392.2 241.8L392.5 242.2L392.2 242.5ZM378.5 242.2L378.8 241.8L379.2 242.2L378.8 242.5ZM366.8 242.2L367.2 241.8L367.5 242.2L367.2 242.5ZM341.8 242.2L342.2 241.8L342.5 242.2L342.2 242.5ZM328.5 242.2L328.8 241.8L329.2 242.2L328.8 242.5ZM457.2 241.8L457.5 241.5L457.8 241.8L457.5 242.2ZM443.8 241.8L444.2 241.5L444.5 241.8L444.2 242.2ZM431.5 241.8L431.8 241.5L432.2 241.8L431.8 242.2ZM430.8 241.8L431.2 241.5L431.5 241.8L431.2 242.2ZM419.8 241.8L420.2 241.5L420.5 241.8L420.2 242.2ZM417.5 241.8L417.8 241.5L418.2 241.8L417.8 242.2ZM404.2 241.8L404.5 241.5L404.8 241.8L404.5 242.2ZM381.5 241.8L381.8 241.5L382.2 241.8L381.8 242.2ZM380.2 241.8L380.5 241.5L380.8 241.8L380.5 242.2ZM365.2 241.8L365.5 241.5L365.8 241.8L365.5 242.2ZM355.8 241.8L356.2 241.5L356.5 242.2L356.2 242.5ZM353.5 241.8L353.8 241.5L354.2 242.2L353.8 242.5ZM342.5 241.8L342.8 241.5L343.2 241.8L342.8 242.2ZM327.8 241.8L328.2 241.5L328.5 241.8L328.2 242.2ZM326.2 241.8L326.5 241.5L326.8 242.2L326.5 242.5ZM431.8 241.5L432.2 241.2L432.5 241.5L432.2 241.8ZM430.2 241.5L430.5 241.2L430.8 241.5L430.5 241.8ZM419.5 241.5L419.8 241.2L420.2 241.5L419.8 241.8ZM418.5 241.5L418.8 241.2L419.2 241.5L418.8 241.8ZM417.8 241.5L418.2 241.2L418.5 241.5L418.2 241.8ZM416.8 241.5L417.2 241.2L417.5 241.5L417.2 241.8ZM406.5 241.5L406.8 241.2L407.2 241.5L406.8 241.8ZM403.5 241.5L403.8 241.2L404.2 241.5L403.8 241.8ZM394.2 241.5L394.5 241.2L394.8 241.5L394.5 241.8ZM390.5 241.5L390.8 241.2L391.2 241.5L390.8 241.8ZM379.2 241.5L379.5 241.2L379.8 241.5L379.5 241.8ZM378.2 241.5L378.5 241.2L378.8 241.5L378.5 241.8ZM366.2 241.5L366.5 241.2L366.8 241.5L366.5 241.8ZM353.8 241.5L354.2 241.2L354.5 241.5L354.2 241.8ZM341.8 241.5L342.2 241.2L342.5 241.5L342.2 241.8ZM338.8 241.5L339.2 241.2L339.5 241.5L339.2 241.8ZM328.5 241.5L328.8 241.2L329.2 241.5L328.8 241.8ZM431.2 241.2L431.5 240.8L431.8 241.2L431.5 241.5ZM429.5 241.2L429.8 240.8L430.2 241.2L429.8 241.5ZM406.2 241.2L406.5 240.8L406.8 241.2L406.5 241.5ZM392.2 241.2L392.5 240.8L392.8 241.2L392.5 241.5ZM369.5 241.2L369.8 240.8L370.2 241.2L369.8 241.5ZM367.2 241.2L367.5 240.8L367.8 241.2L367.5 241.5ZM364.8 241.2L365.2 240.8L365.5 241.2L365.2 241.5ZM355.5 241.2L355.8 240.8L356.2 241.2L355.8 241.5ZM353.2 241.2L353.5 240.8L353.8 241.2L353.5 241.5ZM325.8 241.2L326.2 240.8L326.5 241.5L326.2 241.8ZM456.2 240.8L456.5 240.5L456.8 241.2L456.5 241.5ZM416.5 240.8L416.8 240.5L417.5 240.8L417.2 241.2ZM405.2 240.8L405.5 240.5L405.8 240.8L405.5 241.2ZM403.5 240.8L403.8 240.5L404.5 240.8L404.2 241.2ZM381.2 240.8L381.5 240.5L381.8 240.8L381.5 241.2ZM341.5 240.8L341.8 240.5L342.2 240.8L341.8 241.2ZM326.8 240.8L327.2 240.5L327.5 240.8L327.2 241.2ZM456.5 240.5L456.8 240.2L457.2 240.5L456.8 240.8ZM445.8 240.5L446.2 240.2L446.5 240.5L446.2 240.8ZM443.5 240.2L443.8 240.8L443.2 241.5L442.8 240.8ZM421.8 240.5L422.2 240.2L422.5 240.5L422.2 240.8ZM405.8 240.5L406.2 240.2L406.5 240.5L406.2 240.8ZM393.8 240.5L394.2 240.2L394.5 240.5L394.2 240.8ZM391.5 240.5L391.8 240.2L392.2 240.5L391.8 240.8ZM365.8 240.5L366.2 240.2L366.5 240.5L366.2 240.8ZM364.8 240.5L365.2 240.2L365.5 240.5L365.2 240.8ZM339.5 240.5L339.8 240.2L340.2 240.5L339.8 240.8ZM460.2 240.2L460.5 239.8L460.8 240.2L460.5 240.5ZM429.8 240.2L430.2 239.8L430.8 240.8L430.2 241.2ZM392.5 240.2L392.8 239.8L393.2 240.2L392.8 240.5ZM383.2 240.2L383.5 239.8L383.8 240.2L383.5 240.5ZM381.5 240.2L381.8 239.8L382.2 240.2L381.8 240.5ZM377.8 240.2L378.2 239.8L378.5 240.5L378.2 240.8ZM353.5 240.2L353.8 239.8L354.2 240.2L353.8 240.5ZM352.8 240.2L353.2 239.8L353.5 240.5L353.2 240.8ZM395.2 239.8L395.5 239.5L395.8 239.8L395.5 240.2ZM378.2 239.8L378.5 239.5L378.8 239.8L378.5 240.2ZM365.2 239.8L365.5 239.5L365.8 239.8L365.5 240.2ZM357.5 239.8L357.8 239.5L358.2 239.8L357.8 240.2ZM340.5 239.8L340.8 239.5L341.5 239.8L341.2 240.2ZM432.2 239.5L432.5 239.2L432.8 239.5L432.5 239.8ZM421.5 239.5L421.8 239.2L422.2 239.5L421.8 239.8ZM418.8 239.5L419.2 239.2L419.5 239.5L419.2 239.8ZM391.2 239.5L391.5 239.2L391.8 239.5L391.5 239.8ZM380.5 239.5L380.8 239.2L381.2 239.5L380.8 239.8ZM354.2 239.5L354.5 239.2L354.8 239.5L354.5 239.8ZM343.5 239.5L343.8 239.2L344.2 239.5L343.8 239.8ZM458.8 239.2L459.2 238.8L459.5 239.2L459.2 239.5ZM433.2 239.2L433.5 238.8L433.8 239.2L433.5 239.5ZM407.5 239.2L407.8 238.8L408.2 239.2L407.8 239.5ZM403.8 239.2L404.2 238.8L404.5 239.2L404.2 239.5ZM367.2 239.2L367.5 238.8L367.8 239.2L367.5 239.5ZM341.5 239.2L341.8 238.8L342.2 239.2L341.8 239.5ZM326.8 239.2L327.2 238.8L327.5 239.2L327.2 239.5ZM457.8 238.8L458.2 238.5L458.5 238.8L458.2 239.2ZM455.5 238.8L455.8 238.5L456.2 238.8L455.8 239.2ZM432.8 238.8L433.2 238.5L433.5 238.8L433.2 239.2ZM430.2 238.8L430.5 238.5L431.2 238.8L430.8 239.2ZM392.8 238.8L393.2 238.5L393.5 239.2L393.2 239.5ZM390.5 238.8L390.8 238.5L391.2 238.8L390.8 239.2ZM380.2 238.8L380.5 238.5L380.8 238.8L380.5 239.2ZM365.2 238.8L365.5 238.5L365.8 238.8L365.5 239.2ZM355.2 238.8L355.5 238.5L355.8 238.8L355.5 239.2ZM339.8 238.8L340.2 238.5L340.8 238.8L340.5 239.2ZM327.5 238.8L327.8 238.5L328.2 238.8L327.8 239.2ZM393.8 238.5L394.2 238.2L394.5 238.5L394.2 238.8ZM368.8 238.5L369.2 238.2L369.5 238.5L369.2 238.8ZM326.5 238.5L326.8 238.2L327.2 238.5L326.8 238.8ZM456.5 238.2L456.8 237.8L457.2 238.2L456.8 238.5ZM445.2 238.2L445.5 237.8L445.8 238.2L445.5 238.5ZM380.8 238.2L381.2 237.8L381.5 238.2L381.2 238.5ZM377.8 238.2L378.2 237.8L378.5 238.2L378.2 238.5ZM352.2 238.2L352.5 237.8L352.8 238.2L352.5 238.5ZM461.2 237.8L461.5 237.5L461.8 237.8L461.5 238.2ZM456.2 237.8L456.5 237.5L456.8 237.8L456.5 238.2ZM408.8 237.8L409.2 237.5L409.5 237.8L409.2 238.2ZM393.8 237.8L394.2 237.5L394.5 237.8L394.2 238.2ZM341.5 237.8L341.8 237.5L342.2 237.8L341.8 238.2ZM406.2 237.5L406.5 237.2L406.8 237.5L406.5 237.8ZM381.8 237.5L382.2 237.2L382.5 237.5L382.2 237.8ZM378.8 237.5L379.2 237.2L379.5 237.5L379.2 237.8ZM340.2 237.5L340.5 237.2L340.8 237.5L340.5 237.8ZM443.2 237.2L443.5 236.8L443.8 237.2L443.5 237.5ZM341.8 237.2L342.2 236.8L342.5 237.2L342.2 237.5ZM338.8 237.2L339.2 236.8L339.5 237.2L339.2 237.5ZM429.5 236.8L429.8 236.5L430.2 236.8L429.8 237.2ZM330.5 236.8L330.8 236.5L331.2 236.8L330.8 237.2ZM458.5 236.5L458.8 236.2L459.2 236.5L458.8 236.8ZM341.5 236.2L341.8 235.8L342.2 236.2L341.8 236.5ZM393.5 235.8L393.8 235.5L394.2 235.8L393.8 236.2ZM355.8 235.2L356.2 234.8L356.5 235.2L356.2 235.5ZM330.2 235.2L330.5 234.8L330.8 235.2L330.5 235.5ZM459.5 234.5L459.8 234.2L460.2 234.5L459.8 234.8ZM369.2 234.5L369.5 234.2L369.8 234.5L369.5 234.8ZM458.8 234.2L459.2 233.8L459.5 234.2L459.2 234.5ZM380.8 234.2L381.2 233.8L381.5 234.2L381.2 234.5ZM356.5 234.2L356.8 233.8L357.2 234.2L356.8 234.5ZM432.8 233.8L433.2 233.5L433.5 233.8L433.2 234.2ZM420.2 233.8L420.5 233.5L420.8 233.8L420.5 234.2ZM342.8 233.8L343.2 233.5L343.5 233.8L343.2 234.2ZM330.2 233.8L330.5 233.5L330.8 233.8L330.5 234.2ZM445.8 233.5L446.2 233.2L446.5 233.5L446.2 233.8ZM381.8 233.5L382.2 233.2L382.5 233.5L382.2 233.8ZM369.5 233.5L369.8 233.2L370.2 233.5L369.8 233.8ZM341.8 233.5L342.2 233.2L342.5 233.5L342.2 233.8ZM329.5 233.5L329.8 233.2L330.2 233.5L329.8 233.8ZM447.5 233.2L447.8 232.8L448.2 233.2L447.8 233.5ZM446.5 233.2L446.8 232.8L447.2 233.2L446.8 233.5ZM421.2 233.2L421.5 232.8L421.8 233.2L421.5 233.5ZM393.5 233.2L393.8 232.8L394.2 233.5L393.8 233.8ZM380.2 233.2L380.5 232.8L380.8 233.2L380.5 233.5ZM328.5 233.2L328.8 232.8L329.2 233.2L328.8 233.5ZM459.5 232.8L459.8 232.5L460.2 232.8L459.8 233.2ZM421.8 232.8L422.2 232.5L422.5 232.8L422.2 233.2ZM418.8 232.8L419.2 232.5L419.5 232.8L419.2 233.2ZM406.2 232.8L406.5 232.5L406.8 232.8L406.5 233.2ZM379.5 232.8L379.8 232.5L380.2 232.8L379.8 233.2ZM344.2 232.8L344.5 232.5L344.8 232.8L344.5 233.2ZM341.2 232.8L341.5 232.5L341.8 232.8L341.5 233.2ZM459.2 232.5L459.5 232.2L459.8 232.5L459.5 232.8ZM447.5 232.5L447.8 232.2L448.2 232.5L447.8 232.8ZM446.8 232.5L447.2 232.2L447.5 232.5L447.2 232.8ZM431.5 232.5L431.8 232.2L432.2 232.5L431.8 232.8ZM419.2 232.5L419.5 232.2L419.8 232.5L419.5 232.8ZM393.8 232.5L394.2 232.2L394.5 232.5L394.2 232.8ZM356.8 232.5L357.2 232.2L357.5 232.5L357.2 232.8ZM353.2 232.5L353.5 232.2L353.8 232.5L353.5 232.8ZM341.5 232.5L341.8 232.2L342.2 232.5L341.8 232.8ZM340.8 232.5L341.2 232.2L341.5 232.5L341.2 232.8ZM328.5 232.5L328.8 232.2L329.2 232.5L328.8 232.8ZM459.5 232.2L459.8 231.8L460.2 232.2L459.8 232.5ZM420.2 232.2L420.5 231.8L420.8 232.2L420.5 232.5ZM408.2 232.2L408.5 231.8L408.8 232.2L408.5 232.5ZM392.8 232.2L393.2 231.8L393.5 232.2L393.2 232.5ZM368.8 232.2L369.2 231.8L369.5 232.2L369.2 232.5ZM342.5 232.2L342.8 231.8L343.2 232.2L342.8 232.5ZM330.5 232.2L330.8 231.8L331.2 232.2L330.8 232.5ZM444.8 231.8L445.2 231.5L445.5 231.8L445.2 232.2ZM443.8 231.8L444.2 231.5L444.5 231.8L444.2 232.2ZM432.2 231.8L432.5 231.5L432.8 231.8L432.5 232.2ZM430.2 231.8L430.5 231.5L430.8 231.8L430.5 232.2ZM417.5 231.8L417.8 231.5L418.2 231.8L417.8 232.2ZM405.8 231.8L406.2 231.5L406.5 231.8L406.2 232.2ZM393.2 231.8L393.5 231.5L393.8 231.8L393.5 232.2ZM380.5 231.8L380.8 231.5L381.5 232.2L380.8 232.5ZM379.2 231.8L379.5 231.5L379.8 231.8L379.5 232.2ZM344.5 231.8L344.8 231.5L345.2 231.8L344.8 232.2ZM340.2 231.8L340.5 231.5L340.8 231.8L340.5 232.2ZM328.5 231.8L328.8 231.5L329.2 231.8L328.8 232.2ZM458.5 231.5L458.8 231.2L459.2 231.5L458.8 231.8ZM445.5 231.5L445.8 231.2L446.2 231.5L445.8 231.8ZM432.5 231.5L432.8 231.2L433.2 231.5L432.8 231.8ZM419.5 231.5L419.8 231.2L420.2 231.5L419.8 231.8ZM381.8 231.5L382.2 231.2L382.5 231.5L382.2 231.8ZM378.2 231.5L378.5 231.2L378.8 231.5L378.5 231.8ZM368.8 231.5L369.2 231.2L369.5 231.5L369.2 231.8ZM365.2 231.5L365.5 231.2L365.8 231.5L365.5 231.8ZM357.2 231.5L357.5 231.2L357.8 231.8L357.5 232.2ZM353.5 231.5L353.8 231.2L354.2 231.5L353.8 231.8ZM352.8 231.5L353.2 231.2L353.5 231.8L353.2 232.2ZM352.2 231.5L352.5 231.2L352.8 231.5L352.5 231.8ZM344.2 231.5L344.5 231.2L344.8 231.5L344.5 231.8ZM340.5 231.5L340.8 231.2L341.2 231.5L340.8 231.8ZM339.8 231.5L340.2 231.2L340.5 231.5L340.2 231.8ZM327.5 231.5L327.8 231.2L328.2 231.5L327.8 231.8ZM448.5 231.2L448.8 230.8L449.2 231.2L448.8 231.5ZM433.2 231.2L433.5 230.8L434.2 231.2L433.8 231.5ZM431.5 231.2L431.8 230.8L432.2 231.2L431.8 231.5ZM418.2 231.2L418.5 230.8L418.8 231.2L418.5 231.5ZM416.5 231.2L416.8 230.8L417.2 231.2L416.8 231.5ZM395.2 231.2L395.5 230.8L395.8 231.2L395.5 231.5ZM392.2 231.2L392.5 230.8L392.8 231.2L392.5 231.5ZM390.5 231.2L390.8 230.8L391.5 231.2L391.2 231.5ZM380.2 231.2L380.5 230.8L380.8 231.2L380.5 231.5ZM369.2 231.2L369.5 230.8L369.8 231.2L369.5 231.5ZM364.8 231.2L365.2 230.8L365.5 231.2L365.2 231.5ZM354.2 231.2L354.5 230.8L354.8 231.2L354.5 231.5ZM328.2 231.2L328.5 230.8L328.8 231.2L328.5 231.5ZM456.2 230.8L456.5 230.5L456.8 231.2L456.5 231.5ZM442.5 230.8L442.8 230.5L443.2 230.8L442.8 231.2ZM417.2 230.8L417.5 230.5L417.8 230.8L417.5 231.2ZM408.8 230.8L409.2 230.5L409.5 230.8L409.2 231.2ZM403.5 230.8L403.8 230.5L404.2 230.8L403.8 231.2ZM396.2 230.8L396.5 230.5L396.8 230.8L396.5 231.2ZM391.8 230.8L392.2 230.5L392.5 230.8L392.2 231.2ZM382.5 230.8L382.8 230.5L383.2 230.8L382.8 231.2ZM368.8 230.8L369.2 230.5L369.5 230.8L369.2 231.2ZM356.2 230.8L356.5 230.5L356.8 230.8L356.5 231.2ZM343.5 230.8L343.8 230.5L344.2 230.8L343.8 231.2ZM339.2 230.8L339.5 230.5L339.8 230.8L339.5 231.2ZM330.8 230.8L331.2 230.5L331.5 230.8L331.2 231.2ZM326.5 230.8L326.8 230.5L327.2 231.2L326.8 231.5ZM459.5 230.5L459.8 230.2L460.2 230.5L459.8 230.8ZM456.5 230.5L456.8 230.2L457.2 230.5L456.8 230.8ZM445.8 230.5L446.2 230.2L446.5 230.5L446.2 230.8ZM442.8 230.5L443.2 230.2L443.5 230.5L443.2 230.8ZM432.8 230.5L433.2 230.2L433.5 230.5L433.2 230.8ZM432.2 230.5L432.5 230.2L432.8 230.5L432.5 230.8ZM404.5 230.5L404.8 230.2L405.2 230.5L404.8 230.8ZM393.8 230.5L394.2 230.2L394.5 230.5L394.2 230.8ZM390.8 230.5L391.2 230.2L391.5 230.5L391.2 230.8ZM382.2 230.5L382.5 230.2L382.8 230.5L382.5 230.8ZM378.5 230.5L378.8 230.2L379.2 230.5L378.8 230.8ZM364.8 230.5L365.2 230.2L365.5 230.5L365.2 230.8ZM343.2 230.5L343.5 230.2L343.8 230.5L343.5 230.8ZM340.2 230.5L340.5 230.2L340.8 230.5L340.5 230.8ZM458.8 230.2L459.2 229.8L459.5 230.2L459.2 230.5ZM445.2 230.2L445.5 229.8L445.8 230.2L445.5 230.5ZM443.8 229.8L444.2 230.2L443.8 231.2L443.5 230.8ZM430.2 229.8L430.5 230.2L430.2 231.2L429.8 230.8ZM417.8 230.2L418.2 229.8L418.5 230.2L418.2 230.5ZM406.8 230.2L407.2 229.8L407.5 230.2L407.2 230.5ZM403.8 230.2L404.2 229.8L404.5 230.2L404.2 230.5ZM394.5 230.2L394.8 229.8L395.2 230.2L394.8 230.5ZM380.8 230.2L381.2 229.8L381.5 230.2L381.2 230.5ZM377.8 230.2L378.2 229.8L378.5 230.2L378.2 230.5ZM368.5 230.2L368.8 229.8L369.2 230.2L368.8 230.5ZM365.8 229.8L366.2 230.2L365.8 231.2L365.5 230.8ZM354.8 230.2L355.2 229.8L355.5 230.2L355.2 230.5ZM352.2 229.8L352.5 230.2L352.2 231.2L351.8 230.8ZM339.5 230.2L339.8 229.8L340.2 230.5L339.8 230.8ZM325.8 230.2L326.2 229.8L326.5 230.5L326.2 230.8ZM431.2 229.8L431.5 229.5L432.2 229.8L431.8 230.2ZM430.2 229.8L430.5 229.5L431.2 229.8L430.8 230.2ZM420.2 229.8L420.5 229.5L421.2 229.8L420.8 230.2ZM405.2 229.8L405.5 229.5L405.8 230.2L405.5 230.5ZM404.5 229.8L404.8 229.5L405.2 229.8L404.8 230.2ZM393.8 229.8L394.2 229.5L394.8 229.8L394.5 230.2ZM378.8 229.8L379.2 229.5L379.5 229.8L379.2 230.2ZM367.8 229.8L368.2 229.5L368.5 229.8L368.2 230.2ZM352.8 229.8L353.2 229.5L353.5 229.8L353.2 230.2ZM341.8 229.8L342.2 229.5L342.5 229.8L342.2 230.2ZM327.5 229.8L327.8 229.5L328.2 229.8L327.8 230.2ZM326.8 229.8L327.2 229.5L327.5 229.8L327.2 230.2ZM459.8 229.5L460.2 229.2L460.5 229.5L460.2 229.8ZM457.5 229.5L457.8 229.2L458.2 229.5L457.8 229.8ZM444.8 229.5L445.2 229.2L445.5 229.5L445.2 229.8ZM442.5 229.5L442.8 229.2L443.2 229.5L442.8 229.8ZM407.8 229.5L408.2 229.2L408.5 229.5L408.2 229.8ZM405.5 229.5L405.8 229.2L406.2 229.5L405.8 229.8ZM391.2 229.5L391.5 229.2L391.8 229.5L391.5 229.8ZM381.8 229.5L382.2 229.2L382.5 229.5L382.2 229.8ZM379.5 229.5L379.8 229.2L380.2 229.5L379.8 229.8ZM365.2 229.5L365.5 229.2L365.8 229.5L365.5 229.8ZM355.8 229.5L356.2 229.2L356.5 229.5L356.2 229.8ZM353.5 229.5L353.8 229.2L354.2 229.5L353.8 229.8ZM342.2 229.5L342.5 229.2L342.8 229.5L342.5 229.8ZM339.2 229.5L339.5 229.2L339.8 229.5L339.5 229.8ZM456.8 229.2L457.2 228.8L457.5 229.5L457.2 229.8ZM443.2 229.2L443.5 228.8L443.8 229.5L443.5 229.8ZM430.8 229.2L431.2 228.8L431.5 229.2L431.2 229.5ZM418.5 229.2L418.8 228.8L419.2 229.2L418.8 229.5ZM390.8 229.2L391.2 228.8L391.5 229.2L391.2 229.5ZM381.5 229.2L381.8 228.8L382.2 229.2L381.8 229.5ZM378.5 229.2L378.8 228.8L379.2 229.2L378.8 229.5ZM367.8 229.2L368.2 228.8L368.5 229.2L368.2 229.5ZM366.2 229.2L366.5 228.8L366.8 229.2L366.5 229.5ZM355.5 229.2L355.8 228.8L356.2 229.2L355.8 229.5ZM340.2 229.2L340.5 228.8L340.8 229.2L340.5 229.5ZM327.8 229.2L328.2 228.8L328.5 229.2L328.2 229.5ZM459.5 228.8L459.8 228.5L460.2 228.8L459.8 229.2ZM458.8 228.8L459.2 228.5L459.5 228.8L459.2 229.2ZM457.2 228.8L457.5 228.5L457.8 228.8L457.5 229.2ZM417.2 228.8L417.5 228.5L417.8 228.8L417.5 229.2ZM406.2 228.8L406.5 228.5L406.8 229.2L406.5 229.5ZM403.8 228.8L404.2 228.5L404.5 228.8L404.2 229.2ZM390.5 228.8L390.8 228.5L391.2 228.8L390.8 229.2ZM379.5 228.8L379.8 228.5L380.2 228.8L379.8 229.2ZM377.8 228.8L378.2 228.5L378.5 228.8L378.2 229.2ZM366.8 228.8L367.2 228.5L367.5 228.8L367.2 229.2ZM353.5 228.8L353.8 228.5L354.2 228.8L353.8 229.2ZM340.8 228.8L341.2 228.5L341.5 228.8L341.2 229.2ZM325.8 228.8L326.2 228.5L326.5 228.8L326.2 229.2ZM444.8 228.5L445.2 228.2L445.5 228.5L445.2 228.8ZM443.8 228.5L444.2 228.2L444.5 228.5L444.2 228.8ZM442.8 228.5L443.2 228.2L443.5 228.5L443.2 228.8ZM432.5 228.5L432.8 228.2L433.2 228.5L432.8 228.8ZM431.5 228.5L431.8 228.2L432.2 228.5L431.8 228.8ZM417.5 228.5L417.8 228.2L418.2 228.5L417.8 228.8ZM416.5 228.5L416.8 228.2L417.2 228.5L416.8 228.8ZM405.8 228.5L406.2 228.2L406.5 228.5L406.2 228.8ZM394.5 228.5L394.8 228.2L395.2 228.5L394.8 228.8ZM381.2 228.5L381.5 228.2L381.8 228.5L381.5 228.8ZM378.5 228.5L378.8 228.2L379.2 228.5L378.8 228.8ZM365.2 228.5L365.5 228.2L365.8 228.5L365.5 228.8ZM354.8 228.5L355.2 228.2L355.5 228.5L355.2 228.8ZM351.8 228.5L352.2 228.2L352.5 228.8L352.2 229.2ZM340.5 228.5L340.8 228.2L341.2 228.5L340.8 228.8ZM327.2 228.5L327.5 228.2L327.8 228.5L327.5 228.8ZM456.5 228.2L456.8 227.8L457.2 228.2L456.8 228.5ZM444.2 228.2L444.5 227.8L444.8 228.2L444.5 228.5ZM442.5 228.2L442.8 227.8L443.2 228.2L442.8 228.5ZM431.8 228.2L432.2 227.8L432.5 228.2L432.2 228.5ZM430.2 228.2L430.5 227.8L430.8 228.2L430.5 228.5ZM419.5 228.2L419.8 227.8L420.2 228.2L419.8 228.5ZM417.8 228.2L418.2 227.8L418.5 228.2L418.2 228.5ZM405.5 228.2L405.8 227.8L406.2 228.2L405.8 228.5ZM377.8 228.2L378.2 227.8L378.5 228.2L378.2 228.5ZM365.5 228.2L365.8 227.8L366.2 228.2L365.8 228.5ZM339.2 228.2L339.5 227.8L339.8 228.2L339.5 228.5ZM326.8 228.2L327.2 227.8L327.5 228.2L327.2 228.5ZM456.2 227.8L456.5 227.5L456.8 227.8L456.5 228.2ZM455.5 227.8L455.8 227.5L456.2 227.8L455.8 228.2ZM447.5 227.8L447.8 227.5L448.2 227.8L447.8 228.2ZM444.5 227.8L444.8 227.5L445.2 227.8L444.8 228.2ZM443.8 227.8L444.2 227.5L444.5 227.8L444.2 228.2ZM421.2 227.8L421.5 227.5L421.8 227.8L421.5 228.2ZM408.5 227.8L408.8 227.5L409.2 227.8L408.8 228.2ZM404.8 227.8L405.2 227.5L405.5 227.8L405.2 228.2ZM393.8 227.8L394.2 227.5L394.5 227.8L394.2 228.2ZM365.8 227.8L366.2 227.5L366.5 227.8L366.2 228.2ZM339.8 227.8L340.2 227.5L340.5 227.8L340.2 228.2ZM331.2 227.8L331.5 227.5L331.8 227.8L331.5 228.2ZM326.5 227.8L326.8 227.5L327.2 227.8L326.8 228.2ZM445.5 227.5L445.8 227.2L446.2 227.5L445.8 227.8ZM443.2 227.5L443.5 227.2L443.8 227.8L443.5 228.2ZM435.2 227.5L435.5 227.2L435.8 227.5L435.5 227.8ZM430.5 227.5L430.8 227.2L431.2 227.5L430.8 227.8ZM429.5 227.5L429.8 227.2L430.2 227.5L429.8 227.8ZM404.2 227.5L404.5 227.2L404.8 227.5L404.5 227.8ZM378.8 227.5L379.2 227.2L379.5 227.5L379.2 227.8ZM342.2 227.5L342.5 227.2L342.8 227.5L342.5 227.8ZM327.8 227.5L328.2 227.2L328.5 227.5L328.2 227.8ZM326.2 227.5L326.5 227.2L326.8 227.5L326.5 227.8ZM460.8 227.2L461.2 226.8L461.5 227.2L461.2 227.5ZM448.2 227.2L448.5 226.8L448.8 227.2L448.5 227.5ZM434.5 227.2L434.8 226.8L435.2 227.2L434.8 227.5ZM431.5 227.2L431.8 226.8L432.2 227.2L431.8 227.5ZM404.8 227.2L405.2 226.8L405.5 227.2L405.2 227.5ZM403.5 227.2L403.8 226.8L404.2 227.2L403.8 227.5ZM353.8 227.2L354.2 226.8L354.5 227.2L354.2 227.5ZM341.5 227.2L341.8 226.8L342.2 227.2L341.8 227.5ZM327.5 227.2L327.8 226.8L328.2 227.2L327.8 227.5ZM325.8 227.2L326.2 226.8L326.5 227.2L326.2 227.5ZM431.2 226.8L431.5 226.5L431.8 226.8L431.5 227.2ZM418.8 226.8L419.2 226.5L419.5 226.8L419.2 227.2ZM405.8 226.8L406.2 226.5L406.5 226.8L406.2 227.2ZM390.8 226.8L391.2 226.5L391.5 226.8L391.2 227.2ZM377.8 226.8L378.2 226.5L378.5 226.8L378.2 227.2ZM370.5 226.8L370.8 226.5L371.2 226.8L370.8 227.2ZM329.5 226.8L329.8 226.5L330.2 226.8L329.8 227.2ZM459.5 226.5L459.8 226.2L460.2 226.5L459.8 226.8ZM457.2 226.5L457.5 226.2L457.8 226.5L457.5 226.8ZM443.5 226.5L443.8 226.2L444.2 226.8L443.8 227.2ZM417.2 226.5L417.5 226.2L417.8 226.5L417.5 226.8ZM405.2 226.5L405.5 226.2L405.8 226.5L405.5 226.8ZM393.2 226.5L393.5 226.2L393.8 226.5L393.5 226.8ZM381.2 226.5L381.5 226.2L381.8 226.5L381.5 226.8ZM365.2 226.5L365.5 226.2L365.8 226.5L365.5 226.8ZM353.2 226.5L353.5 226.2L353.8 226.5L353.5 226.8ZM326.8 226.5L327.2 226.2L327.5 226.5L327.2 226.8ZM458.8 226.2L459.2 225.8L459.5 226.2L459.2 226.5ZM432.2 226.2L432.5 225.8L432.8 226.2L432.5 226.5ZM429.5 226.2L429.8 225.8L430.2 226.2L429.8 226.5ZM421.2 226.2L421.5 225.8L421.8 226.2L421.5 226.5ZM391.8 226.2L392.2 225.8L392.5 226.2L392.2 226.5ZM390.5 226.2L390.8 225.8L391.2 226.2L390.8 226.5ZM458.2 225.8L458.5 225.5L458.8 225.8L458.5 226.2ZM431.5 225.8L431.8 225.5L432.2 225.8L431.8 226.2ZM403.8 225.8L404.2 225.5L404.5 225.8L404.2 226.2ZM392.2 225.8L392.5 225.5L392.8 225.8L392.5 226.2ZM355.8 225.8L356.2 225.5L356.5 225.8L356.2 226.2ZM354.2 225.8L354.5 225.5L354.8 225.8L354.5 226.2ZM342.5 225.8L342.8 225.5L343.2 225.8L342.8 226.2ZM326.2 225.8L326.5 225.5L326.8 225.8L326.5 226.2ZM457.5 225.5L457.8 225.2L458.2 225.5L457.8 225.8ZM443.8 225.5L444.2 225.2L444.5 225.5L444.2 225.8ZM406.2 225.5L406.5 225.2L406.8 225.5L406.5 225.8ZM404.5 225.5L404.8 225.2L405.2 225.5L404.8 225.8ZM390.8 225.5L391.2 225.2L391.5 225.5L391.2 225.8ZM341.8 225.5L342.2 225.2L342.5 225.5L342.2 225.8ZM339.5 225.5L339.8 225.2L340.2 225.5L339.8 225.8ZM325.8 225.5L326.2 225.2L326.5 225.5L326.2 225.8ZM460.5 225.2L460.8 224.8L461.2 225.2L460.8 225.5ZM456.8 225.2L457.2 224.8L457.5 225.2L457.2 225.5ZM442.5 225.2L442.8 224.8L443.2 225.2L442.8 225.5ZM391.2 225.2L391.5 224.8L392.2 225.2L391.8 225.5ZM365.8 225.2L366.2 224.8L366.5 225.2L366.2 225.5ZM442.8 224.8L443.2 224.5L443.5 224.8L443.2 225.2ZM434.5 224.8L434.8 224.5L435.2 224.8L434.8 225.2ZM429.5 224.8L429.8 224.5L430.2 224.8L429.8 225.2ZM379.8 224.8L380.2 224.5L380.5 224.8L380.2 225.2ZM368.2 224.8L368.5 224.5L368.8 224.8L368.5 225.2ZM430.5 224.5L430.8 224.2L431.2 224.5L430.8 224.8ZM365.2 224.5L365.5 224.2L365.8 224.5L365.5 224.8ZM343.5 224.5L343.8 224.2L344.2 224.5L343.8 224.8ZM340.8 224.5L341.2 224.2L341.5 224.5L341.2 224.8ZM459.2 224.2L459.5 223.8L459.8 224.2L459.5 224.5ZM455.8 224.2L456.2 223.8L456.5 224.2L456.2 224.5ZM444.2 224.2L444.5 223.8L444.8 224.2L444.5 224.5ZM394.8 224.2L395.2 223.8L395.5 224.2L395.2 224.5ZM381.5 224.2L381.8 223.8L382.2 224.2L381.8 224.5ZM378.2 224.2L378.5 223.8L378.8 224.2L378.5 224.5ZM328.8 224.2L329.2 223.8L329.5 224.2L329.2 224.5ZM390.5 223.5L390.8 223.2L391.2 223.5L390.8 223.8ZM431.8 222.8L432.2 222.5L432.5 222.8L432.2 223.2ZM394.2 221.8L394.5 221.5L394.8 221.8L394.5 222.2ZM446.5 221.5L446.8 221.2L447.5 221.5L447.2 221.8ZM433.8 221.5L434.2 221.2L434.5 221.5L434.2 221.8ZM419.8 221.5L420.2 221.2L420.5 221.5L420.2 221.8ZM407.2 221.5L407.5 221.2L407.8 221.5L407.5 221.8ZM394.5 221.5L394.8 221.2L395.2 221.5L394.8 221.8ZM458.8 221.2L459.2 220.8L459.5 221.2L459.2 221.5ZM382.2 221.2L382.5 220.8L382.8 221.2L382.5 221.5ZM343.5 221.2L343.8 220.8L344.2 221.2L343.8 221.5ZM395.2 220.8L395.5 220.5L395.8 220.8L395.5 221.2ZM368.2 220.8L368.5 220.5L368.8 220.8L368.5 221.2ZM356.2 220.8L356.5 220.5L356.8 220.8L356.5 221.2ZM329.2 220.8L329.5 220.5L329.8 220.8L329.5 221.2ZM408.2 220.5L408.5 220.2L408.8 220.5L408.5 220.8ZM395.5 220.5L395.8 220.2L396.2 220.5L395.8 220.8ZM393.8 220.5L394.2 220.2L394.5 220.5L394.2 220.8ZM381.2 220.5L381.5 220.2L381.8 220.5L381.5 220.8ZM355.8 220.5L356.2 220.2L356.5 220.5L356.2 220.8ZM354.2 220.5L354.5 220.2L354.8 220.5L354.5 220.8ZM459.5 220.2L459.8 219.8L460.2 220.2L459.8 220.5ZM420.2 220.2L420.5 219.8L420.8 220.2L420.5 220.5ZM408.5 220.2L408.8 219.8L409.2 220.2L408.8 220.5ZM393.2 220.2L393.5 219.8L393.8 220.2L393.5 220.5ZM369.2 220.2L369.5 219.8L369.8 220.2L369.5 220.5ZM356.5 220.2L356.8 219.8L357.2 220.2L356.8 220.5ZM353.8 220.2L354.2 219.8L354.5 220.2L354.2 220.5ZM458.8 219.8L459.2 219.5L459.5 219.8L459.2 220.2ZM431.8 219.8L432.2 219.5L432.5 219.8L432.2 220.2ZM421.5 219.8L421.8 219.5L422.2 219.8L421.8 220.2ZM418.5 219.8L418.8 219.5L419.2 219.8L418.8 220.2ZM405.8 219.8L406.2 219.5L406.5 219.8L406.2 220.2ZM393.8 219.8L394.2 219.5L394.5 219.8L394.2 220.2ZM355.2 219.8L355.5 219.5L355.8 219.8L355.5 220.2ZM343.2 219.8L343.5 219.5L343.8 219.8L343.5 220.2ZM328.2 219.8L328.5 219.5L328.8 219.8L328.5 220.2ZM447.2 219.5L447.5 219.2L447.8 219.5L447.5 219.8ZM434.5 219.5L434.8 219.2L435.2 219.5L434.8 219.8ZM421.8 219.5L422.2 219.2L422.5 219.5L422.2 219.8ZM409.2 219.5L409.5 219.2L409.8 219.5L409.5 219.8ZM354.8 219.5L355.2 219.2L355.5 219.5L355.2 219.8ZM353.2 219.5L353.5 219.2L353.8 219.5L353.5 219.8ZM342.2 219.5L342.5 219.2L342.8 219.5L342.5 219.8ZM340.5 219.5L340.8 219.2L341.2 219.5L340.8 219.8ZM329.5 219.5L329.8 219.2L330.2 219.5L329.8 219.8ZM327.8 219.5L328.2 219.2L328.5 219.5L328.2 219.8ZM457.5 219.2L457.8 218.8L458.2 219.2L457.8 219.5ZM447.8 219.2L448.2 218.8L448.5 219.2L448.2 219.5ZM445.2 219.2L445.5 218.8L445.8 219.2L445.5 219.5ZM419.2 219.2L419.5 218.8L419.8 219.2L419.5 219.5ZM394.5 219.2L394.8 218.8L395.2 219.2L394.8 219.5ZM366.8 219.2L367.2 218.8L367.5 219.2L367.2 219.5ZM353.5 219.2L353.8 218.8L354.2 219.2L353.8 219.5ZM342.8 219.2L343.2 218.8L343.5 219.2L343.2 219.5ZM328.5 219.2L328.8 218.8L329.2 219.2L328.8 219.5ZM460.2 218.8L460.5 218.5L460.8 219.2L460.5 219.5ZM444.5 218.8L444.8 218.5L445.2 218.8L444.8 219.2ZM431.2 218.8L431.5 218.5L431.8 218.8L431.5 219.2ZM420.8 218.8L421.2 218.5L421.5 218.8L421.2 219.2ZM391.8 218.8L392.2 218.5L392.5 219.2L392.2 219.5ZM378.5 218.8L378.8 218.5L379.2 218.8L378.8 219.2ZM368.2 218.8L368.5 218.5L368.8 218.8L368.5 219.2ZM354.2 218.8L354.5 218.5L354.8 218.8L354.5 219.2ZM446.8 218.5L447.2 218.2L447.5 218.5L447.2 218.8ZM443.8 218.5L444.2 218.2L444.5 218.5L444.2 218.8ZM433.2 218.5L433.5 218.2L433.8 218.5L433.5 218.8ZM430.5 218.5L430.8 218.2L431.5 218.5L431.2 218.8ZM417.2 218.5L417.5 218.2L418.2 218.5L417.8 218.8ZM406.5 218.5L407.2 218.2L407.5 218.8L407.2 219.2ZM393.5 218.5L393.8 218.2L394.2 218.5L393.8 218.8ZM390.8 218.5L391.2 218.2L391.5 218.5L391.2 218.8ZM382.8 218.5L383.2 218.2L383.5 218.5L383.2 218.8ZM380.2 218.5L380.5 218.2L380.8 218.5L380.5 218.8ZM369.5 218.5L369.8 218.2L370.2 218.5L369.8 218.8ZM353.5 218.5L353.8 218.2L354.2 218.5L353.8 218.8ZM343.2 218.5L343.5 218.2L343.8 218.5L343.5 218.8ZM340.2 218.5L340.5 218.2L340.8 218.5L340.5 218.8ZM327.2 218.5L327.5 218.2L327.8 218.5L327.5 218.8ZM460.8 218.2L461.2 217.8L461.5 218.2L461.2 218.5ZM458.2 218.2L458.5 217.8L458.8 218.2L458.5 218.5ZM455.5 218.2L455.8 217.8L456.2 218.2L455.8 218.5ZM448.5 218.2L448.8 217.8L449.2 218.2L448.8 218.5ZM419.5 218.2L419.8 217.8L420.2 218.2L419.8 218.5ZM416.8 218.2L417.2 217.8L417.5 218.2L417.2 218.5ZM407.2 218.2L407.5 217.8L407.8 218.2L407.5 218.5ZM405.2 218.2L405.5 217.8L405.8 218.2L405.5 218.5ZM395.5 218.2L395.8 217.8L396.2 218.2L395.8 218.5ZM366.5 218.2L366.8 217.8L367.2 218.2L366.8 218.5ZM365.8 218.2L366.2 217.8L366.5 218.2L366.2 218.5ZM354.2 218.2L354.5 217.8L354.8 218.2L354.5 218.5ZM342.5 218.2L342.8 217.8L343.2 218.2L342.8 218.5ZM341.8 218.2L342.2 217.8L342.5 218.2L342.2 218.5ZM330.2 218.2L330.5 217.8L330.8 218.2L330.5 218.5ZM327.5 218.2L327.8 217.8L328.2 218.2L327.8 218.5ZM444.8 217.8L445.2 217.5L445.5 217.8L445.2 218.2ZM443.8 217.8L444.2 217.5L444.5 217.8L444.2 218.2ZM442.8 217.8L443.2 217.5L443.5 217.8L443.2 218.2ZM432.5 217.8L432.8 217.5L433.2 217.8L432.8 218.2ZM430.5 217.8L430.8 217.5L431.2 217.8L430.8 218.2ZM429.5 217.8L429.8 217.5L430.2 217.8L429.8 218.2ZM421.2 217.8L421.5 217.5L421.8 217.8L421.5 218.2ZM420.2 217.8L420.5 217.5L420.8 217.8L420.5 218.2ZM419.2 217.8L419.5 217.5L419.8 217.8L419.5 218.2ZM393.8 217.8L394.2 217.5L394.5 217.8L394.2 218.2ZM392.8 217.8L393.2 217.5L393.5 218.2L393.2 218.5ZM379.5 217.8L379.8 217.5L380.2 217.8L379.8 218.2ZM370.2 217.8L370.5 217.5L370.8 217.8L370.5 218.2ZM369.2 217.8L369.5 217.5L369.8 217.8L369.5 218.2ZM353.2 217.8L353.5 217.5L353.8 217.8L353.5 218.2ZM329.5 217.8L329.8 217.5L330.2 217.8L329.8 218.2ZM325.8 217.8L326.2 217.5L326.5 217.8L326.2 218.2ZM407.5 217.5L407.8 217.2L408.2 217.5L407.8 217.8ZM394.5 217.5L394.8 217.2L395.2 217.5L394.8 217.8ZM391.5 217.5L391.8 217.2L392.5 217.5L392.2 217.8ZM378.5 217.5L378.8 217.2L379.5 217.5L379.2 217.8ZM368.2 217.5L368.5 217.2L368.8 217.5L368.5 217.8ZM365.5 217.8L365.8 217.2L366.5 217.5L365.8 218.2ZM355.2 217.5L355.5 217.2L355.8 217.5L355.5 217.8ZM342.2 217.5L342.5 217.2L342.8 217.5L342.5 217.8ZM339.2 217.5L339.5 217.2L339.8 217.5L339.5 217.8ZM331.2 217.5L331.5 217.2L331.8 217.5L331.5 217.8ZM326.2 217.5L326.5 217.2L326.8 217.5L326.5 217.8ZM458.8 217.2L459.2 216.8L459.5 217.2L459.2 217.5ZM455.8 217.2L456.2 216.8L456.5 217.2L456.2 217.5ZM432.2 217.2L432.5 216.8L433.2 217.2L432.8 217.5ZM405.8 217.2L406.2 216.8L406.8 217.2L406.5 217.5ZM403.5 217.2L403.8 216.8L404.2 217.2L403.8 217.5ZM369.8 217.2L370.2 216.8L370.5 217.2L370.2 217.5ZM365.2 217.2L365.5 216.8L365.8 217.2L365.5 217.5ZM353.5 217.2L353.8 216.8L354.2 217.2L353.8 217.5ZM340.8 217.2L341.2 216.8L341.5 217.2L341.2 217.5ZM328.8 217.2L329.2 216.8L329.8 217.2L329.5 217.5ZM458.5 216.8L458.8 216.5L459.2 216.8L458.8 217.2ZM457.5 216.8L457.8 216.5L458.2 216.8L457.8 217.2ZM431.2 216.8L431.5 216.5L431.8 216.8L431.5 217.2ZM421.2 216.8L421.5 216.5L421.8 216.8L421.5 217.2ZM418.5 216.8L418.8 216.5L419.2 216.8L418.8 217.2ZM417.5 216.8L417.8 216.5L418.2 216.8L417.8 217.2ZM393.5 216.8L393.8 216.5L394.2 216.8L393.8 217.2ZM391.2 216.8L391.5 216.5L391.8 216.8L391.5 217.2ZM379.8 216.8L380.2 216.5L380.5 216.8L380.2 217.2ZM378.5 216.8L378.8 216.5L379.2 216.8L378.8 217.2ZM367.2 216.8L367.5 216.5L367.8 216.8L367.5 217.2ZM364.8 216.8L365.2 216.5L365.5 216.8L365.2 217.2ZM343.5 216.8L343.8 216.5L344.2 216.8L343.8 217.2ZM342.2 216.8L342.5 216.5L342.8 216.8L342.5 217.2ZM339.8 216.8L340.2 216.5L340.5 216.8L340.2 217.2ZM327.2 216.8L327.5 216.5L327.8 216.8L327.5 217.2ZM443.2 216.5L443.5 216.2L443.8 216.5L443.5 216.8ZM432.8 216.5L433.2 216.2L433.5 216.5L433.2 216.8ZM429.8 216.5L430.2 216.2L430.8 216.5L430.5 216.8ZM419.8 216.5L420.2 216.2L420.5 216.5L420.2 216.8ZM416.8 216.5L417.2 216.2L417.5 216.5L417.2 216.8ZM403.5 216.5L403.8 216.2L404.2 216.5L403.8 216.8ZM393.2 216.5L393.5 216.2L393.8 216.5L393.5 216.8ZM380.2 216.5L380.5 216.2L380.8 216.5L380.5 216.8ZM377.8 216.5L378.2 216.2L378.5 216.5L378.2 216.8ZM353.5 216.5L353.8 216.2L354.2 216.5L353.8 216.8ZM340.5 216.5L340.8 216.2L341.2 216.5L340.8 216.8ZM330.2 216.5L330.5 216.2L330.8 216.5L330.5 216.8ZM327.8 216.5L328.2 216.2L328.5 216.5L328.2 216.8ZM444.8 216.2L445.2 215.8L445.8 216.2L445.5 216.5ZM442.5 216.2L442.8 215.8L443.5 216.2L443.2 216.5ZM418.8 216.2L419.2 215.8L419.8 216.2L419.5 216.5ZM416.5 216.2L416.8 215.8L417.2 216.2L416.8 216.5ZM406.8 216.2L407.2 215.8L407.5 216.2L407.2 216.5ZM404.5 216.2L404.8 215.8L405.2 216.2L404.8 216.5ZM394.8 216.2L395.2 215.8L395.5 216.2L395.2 216.5ZM392.5 216.2L392.8 215.8L393.2 216.2L392.8 216.5ZM390.5 216.2L390.8 215.8L391.2 216.2L390.8 216.5ZM378.5 216.2L378.8 215.8L379.2 216.2L378.8 216.5ZM366.5 216.2L366.8 215.8L367.2 216.2L366.8 216.5ZM351.8 216.2L352.2 215.8L352.5 216.2L352.2 216.5ZM340.2 216.2L340.5 215.8L340.8 216.2L340.5 216.5ZM328.2 216.2L328.5 215.8L328.8 216.2L328.5 216.5ZM325.8 216.2L326.2 215.8L326.5 216.2L326.2 216.5ZM458.2 215.8L458.5 215.5L458.8 215.8L458.5 216.2ZM457.2 215.8L457.5 215.5L457.8 215.8L457.5 216.2ZM456.5 215.8L456.8 215.5L457.2 215.8L456.8 216.2ZM455.5 215.8L455.8 215.5L456.2 215.8L455.8 216.2ZM445.5 215.8L445.8 215.5L446.2 215.8L445.8 216.2ZM444.5 215.8L444.8 215.5L445.2 215.8L444.8 216.2ZM431.8 215.8L432.2 215.5L432.5 215.8L432.2 216.2ZM430.8 215.8L431.2 215.5L431.5 215.8L431.2 216.2ZM419.8 215.8L420.2 215.5L420.5 215.8L420.2 216.2ZM407.2 215.8L407.5 215.5L407.8 215.8L407.5 216.2ZM404.8 215.8L405.2 215.5L405.5 215.8L405.2 216.2ZM392.2 215.8L392.5 215.5L392.8 215.8L392.5 216.2ZM381.2 215.8L381.5 215.5L381.8 215.8L381.5 216.2ZM379.5 215.8L379.8 215.5L380.2 215.8L379.8 216.2ZM354.8 215.8L355.2 215.5L355.5 215.8L355.2 216.2ZM353.5 215.8L353.8 215.5L354.2 215.8L353.8 216.2ZM338.8 215.8L339.2 215.5L339.5 215.8L339.2 216.2ZM326.2 215.8L326.5 215.5L326.8 215.8L326.5 216.2ZM430.5 215.5L430.8 215.2L431.2 215.5L430.8 215.8ZM420.2 215.5L420.5 215.2L420.8 215.5L420.5 215.8ZM417.2 215.5L417.5 215.2L417.8 215.5L417.5 215.8ZM404.5 215.5L404.8 215.2L405.2 215.5L404.8 215.8ZM394.8 215.5L395.2 215.2L395.5 215.5L395.2 215.8ZM391.8 215.5L392.2 215.2L392.5 215.5L392.2 215.8ZM379.2 215.5L379.5 215.2L379.8 215.5L379.5 215.8ZM365.5 215.5L365.8 215.2L366.2 215.5L365.8 215.8ZM352.8 215.5L353.2 215.2L353.5 215.5L353.2 215.8ZM339.5 215.5L339.8 215.2L340.2 215.5L339.8 215.8ZM329.8 215.5L330.2 215.2L330.5 215.5L330.2 215.8ZM329.2 215.5L329.5 215.2L329.8 215.5L329.5 215.8ZM326.8 215.5L327.2 215.2L327.5 215.5L327.2 215.8ZM443.5 215.2L443.8 214.8L444.2 215.2L443.8 215.5ZM417.5 215.2L417.8 214.8L418.2 215.2L417.8 215.5ZM407.8 215.2L408.2 214.8L408.5 215.2L408.2 215.5ZM405.5 215.2L405.8 214.8L406.2 215.2L405.8 215.5ZM391.2 215.2L391.5 214.8L391.8 215.2L391.5 215.5ZM379.5 215.2L379.8 214.8L380.2 215.2L379.8 215.5ZM365.2 215.2L365.5 214.8L365.8 215.2L365.5 215.5ZM353.5 215.2L353.8 214.8L354.2 215.2L353.8 215.5ZM343.8 215.2L344.2 214.8L344.5 215.2L344.2 215.5ZM341.5 215.2L341.8 214.8L342.2 215.2L341.8 215.5ZM339.2 215.2L339.5 214.8L339.8 215.2L339.5 215.5ZM457.8 214.8L458.2 214.5L458.5 214.8L458.2 215.2ZM446.8 214.8L447.2 214.5L447.5 214.8L447.2 215.2ZM416.8 214.8L417.2 214.5L417.5 214.8L417.2 215.2ZM408.2 214.8L408.5 214.5L408.8 214.8L408.5 215.2ZM405.8 214.8L406.2 214.5L406.5 214.8L406.2 215.2ZM404.2 214.8L404.5 214.5L404.8 214.8L404.5 215.2ZM394.8 214.8L395.2 214.5L395.5 214.8L395.2 215.2ZM393.2 214.8L393.5 214.5L393.8 214.8L393.5 215.2ZM391.5 214.8L391.8 214.5L392.2 214.8L391.8 215.2ZM390.8 214.8L391.2 214.5L391.5 214.8L391.2 215.2ZM382.2 214.8L382.5 214.5L382.8 214.8L382.5 215.2ZM379.8 214.8L380.2 214.5L380.5 214.8L380.2 215.2ZM378.2 214.8L378.5 214.5L378.8 214.8L378.5 215.2ZM369.5 214.8L369.8 214.5L370.2 214.8L369.8 215.2ZM367.2 214.8L367.5 214.5L367.8 214.8L367.5 215.2ZM364.8 214.8L365.2 214.5L365.5 214.8L365.2 215.2ZM356.2 214.8L356.5 214.5L356.8 214.8L356.5 215.2ZM354.5 214.8L354.8 214.5L355.2 214.8L354.8 215.2ZM343.5 214.8L343.8 214.5L344.2 214.8L343.8 215.2ZM341.2 214.8L341.5 214.5L341.8 214.8L341.5 215.2ZM455.8 214.5L456.2 214.2L456.5 214.5L456.2 214.8ZM446.2 214.5L446.5 214.2L446.8 214.5L446.5 214.8ZM442.5 214.5L442.8 214.2L443.2 214.5L442.8 214.8ZM432.2 214.5L432.5 214.2L432.8 214.5L432.5 214.8ZM403.8 214.5L404.2 214.2L404.5 214.5L404.2 214.8ZM380.2 214.5L380.5 214.2L380.8 214.5L380.5 214.8ZM377.8 214.5L378.2 214.2L378.5 214.5L378.2 214.8ZM354.2 214.5L354.5 214.2L354.8 214.5L354.5 214.8ZM351.8 214.5L352.2 214.2L352.5 214.5L352.2 214.8ZM328.2 214.5L328.5 214.2L328.8 214.5L328.5 214.8ZM325.8 214.5L326.2 214.2L326.5 214.5L326.2 214.8ZM446.5 214.2L446.8 213.8L447.2 214.2L446.8 214.5ZM430.2 214.2L430.5 213.8L430.8 214.2L430.5 214.5ZM408.8 214.2L409.2 213.8L409.5 214.2L409.2 214.5ZM368.8 214.2L369.2 213.8L369.5 214.2L369.2 214.5ZM354.5 214.2L354.8 213.8L355.2 214.2L354.8 214.5ZM328.8 214.2L329.2 213.8L329.5 214.2L329.2 214.5ZM421.8 213.8L422.2 213.5L422.5 213.8L422.2 214.2ZM409.2 213.8L409.5 213.5L409.8 213.8L409.5 214.2ZM406.8 213.8L407.2 213.5L407.5 213.8L407.2 214.2ZM405.2 213.8L405.5 213.5L405.8 213.8L405.5 214.2ZM396.5 213.8L396.8 213.5L397.2 213.8L396.8 214.2ZM391.8 213.8L392.2 213.5L392.5 213.8L392.2 214.2ZM356.8 213.8L357.2 213.5L357.5 213.8L357.2 214.2ZM344.2 213.8L344.5 213.5L344.8 213.8L344.5 214.2ZM341.8 213.8L342.2 213.5L342.5 213.8L342.2 214.2ZM331.5 213.8L331.8 213.5L332.2 213.8L331.8 214.2ZM329.2 213.8L329.5 213.5L329.8 213.8L329.5 214.2ZM326.8 213.8L327.2 213.5L327.5 213.8L327.2 214.2ZM460.2 213.5L460.5 213.2L460.8 213.5L460.5 213.8ZM443.2 213.5L443.5 213.2L443.8 213.5L443.5 213.8ZM408.5 213.5L408.8 213.2L409.2 213.5L408.8 213.8ZM407.2 213.5L407.5 213.2L407.8 213.5L407.5 213.8ZM406.2 213.5L406.5 213.2L406.8 213.5L406.5 213.8ZM390.5 213.5L390.8 213.2L391.2 213.5L390.8 213.8ZM355.5 213.5L355.8 213.2L356.2 213.5L355.8 213.8ZM354.5 213.5L354.8 213.2L355.2 213.5L354.8 213.8ZM353.2 213.5L353.5 213.2L353.8 213.5L353.5 213.8ZM340.8 213.5L341.2 213.2L341.5 213.5L341.2 213.8ZM458.5 213.2L458.8 212.8L459.8 213.2L459.5 213.5ZM416.5 213.2L416.8 212.8L417.5 213.2L417.2 213.5ZM367.5 213.2L367.8 212.8L368.5 213.2L368.2 213.5ZM327.8 213.2L328.2 212.8L328.5 213.2L328.2 213.5ZM457.2 212.8L457.5 212.5L458.2 212.8L457.8 213.2ZM379.8 212.8L380.2 212.5L380.5 212.8L380.2 213.2ZM367.2 212.8L367.5 212.5L367.8 212.8L367.5 213.2ZM364.8 212.8L365.2 212.5L365.5 212.8L365.2 213.2ZM351.8 212.8L352.2 212.5L352.5 212.8L352.2 213.2ZM339.2 212.8L339.5 212.5L339.8 212.8L339.5 213.2ZM456.2 212.5L456.5 212.2L456.8 212.5L456.5 212.8ZM442.8 212.5L443.2 212.2L443.5 212.5L443.2 212.8ZM430.5 212.5L430.8 212.2L431.2 212.5L430.8 212.8ZM418.2 212.5L418.5 212.2L418.8 212.5L418.5 212.8ZM392.5 212.5L392.8 212.2L393.2 212.5L392.8 212.8ZM380.2 212.5L380.5 212.2L380.8 212.5L380.5 212.8ZM342.2 212.5L342.5 212.2L342.8 212.5L342.5 212.8ZM459.8 212.2L460.2 211.8L460.5 212.2L460.2 212.5ZM447.8 212.2L448.2 211.8L448.5 212.2L448.2 212.5ZM422.2 212.2L422.5 211.8L422.8 212.2L422.5 212.5ZM366.8 212.2L367.2 211.8L367.5 212.2L367.2 212.5ZM329.2 212.2L329.5 211.8L329.8 212.2L329.5 212.5ZM326.5 212.2L326.8 211.8L327.2 212.2L326.8 212.5ZM460.5 211.8L460.8 211.5L461.2 211.8L460.8 212.2ZM457.8 211.8L458.2 211.5L458.5 211.8L458.2 212.2ZM419.5 211.8L419.8 211.5L420.2 211.8L419.8 212.2ZM395.8 211.8L396.2 211.5L396.5 211.8L396.2 212.2ZM370.2 211.8L370.5 211.5L370.8 211.8L370.5 212.2ZM456.8 211.5L457.2 211.2L457.5 211.5L457.2 211.8ZM442.5 211.5L442.8 211.2L443.2 211.5L442.8 211.8ZM431.2 211.5L431.5 211.2L431.8 211.5L431.5 211.8ZM416.8 211.5L417.2 211.2L417.5 211.5L417.2 211.8ZM459.2 211.2L459.5 210.8L459.8 211.2L459.5 211.5ZM444.2 211.2L444.5 210.8L444.8 211.2L444.5 211.5ZM404.5 211.2L404.8 210.8L405.2 211.2L404.8 211.5ZM390.5 210.8L390.8 210.5L391.2 210.8L390.8 211.2ZM330.8 210.8L331.2 210.5L331.5 210.8L331.2 211.2ZM380.2 210.5L380.5 210.2L380.8 210.5L380.5 210.8ZM329.2 210.5L329.5 210.2L329.8 210.5L329.5 210.8ZM377.8 210.2L378.2 209.8L378.5 210.2L378.2 210.5ZM14.8 41.5L18.8 38.2L23.8 35.8L27.8 34.8L30.8 32.2L34.5 30.2L40.8 28.2L48.2 27.5L48.5 27.2L51.5 27.2L51.8 26.8L69.8 26.8L70.2 26.5L78.2 26.2L78.5 25.8L95.8 25.8L96.2 25.5L111.2 24.8L111.5 24.5L117.2 24.5L117.5 24.2L171.8 24.2L172.2 24.5L177.8 24.5L178.2 24.8L183.2 24.8L183.5 25.2L390.8 25.2L391.2 24.8L416.5 24.8L416.8 25.2L424.5 25.2L424.8 25.5L429.8 25.5L430.2 25.8L435.5 26.2L441.2 27.5L445.5 29.2L449.8 31.5L454.8 36.2L455.5 37.5L459.5 41.5L459.5 93.8L460.2 95.2L460.8 99.2L461.5 100.8L462.2 106.8L459.5 114.2L454.8 120.8L453.2 122.5L448.2 124.8L443.2 125.8L440.5 125.8L440.2 126.2L436.2 126.2L435.8 126.5L334.8 126.5L334.5 126.2L319.2 125.5L318.8 125.2L311.8 125.2L311.5 124.8L286.5 124.8L278.5 127.5L273.8 129.8L267.2 135.5L261.5 141.8L255.2 144.8L248.5 151.5L247.2 151.5L243.2 150.2L238.5 147.8L230.2 139.5L227.2 137.5L221.5 134.8L214.2 128.5L209.8 125.8L180.5 125.8L180.2 126.2L175.8 126.2L175.5 126.5L165.5 126.5L165.2 126.2L161.2 126.2L160.8 125.8L156.8 125.8L156.5 125.5L152.5 125.5L152.2 125.2L143.5 124.8L143.2 124.5L137.2 124.2L136.8 123.8L133.2 123.8L132.8 123.5L130.2 123.5L129.8 123.2L120.2 122.2L119.8 121.8L104.8 121.5L97.8 123.5L92.8 125.8L86.2 127.8L82.2 130.2L79.5 132.5L74.5 134.2L69.5 136.8L66.8 138.8L54.2 138.8L49.2 135.5L40.8 132.2L37.2 129.5L29.5 121.5L19.2 106.2L14.8 93.2Z"/>
<path fill="#ffc800" fill-rule="evenodd" d="M15.2 455.8L15.8 457.2L16.8 462.2L17.2 467.2L17.5 467.5L17.5 471.8L450.2 471.8L449.8 465.2L448.8 461.8L447.5 459.2L446.2 457.8L442.8 456.2L438.5 453.2L433.5 451.5L428.2 450.8L427.8 450.5L425.5 450.5L425.2 450.2L417.8 449.8L417.5 449.5L411.8 449.5L411.5 449.2L394.8 448.8L394.5 448.5L180.8 448.5L180.5 448.8L173.5 448.8L173.2 449.2L116.2 449.2L115.8 448.8L101.8 448.5L101.5 448.2L95.8 448.2L95.5 447.8L77.2 447.8L76.8 447.5L71.8 447.5L71.5 447.2L51.2 447.5L50.8 447.2L44.2 447.2L43.8 446.8L26.8 446.5L23.2 447.5L19.5 449.5L17.2 451.8ZM4.2 284.8L0.2 284.8L0.2 371.5L2.8 371.2L14.5 359.5L19.5 352.2L23.2 344.2L24.5 339.5L28.2 334.8L40.5 330.8L42.5 329.8L47.5 326.2L47.5 313.5L40.8 306.8L38.8 300.5L36.2 297.8L25.5 290.5L22.2 288.8L18.5 287.8L15.5 286.2L7.8 285.5L7.5 285.2L4.5 285.2ZM232.5 300.2L228.5 293.5L225.2 289.8L221.2 286.8L211.5 282.5L200.8 279.2L197.2 278.5L191.5 276.2L186.8 274.8L183.5 272.5L167.8 275.2L162.2 276.8L158.2 278.8L157.2 278.8L155.8 277.8L150.8 276.5L137.2 275.5L133.8 274.8L130.5 274.8L123.5 276.5L118.2 278.5L116.8 278.5L115.2 279.2L113.8 279.2L105.5 281.2L96.8 284.2L91.8 286.5L79.8 298.2L76.2 300.2L75.2 301.2L67.2 313.2L67.2 313.8L68.5 317.5L72.8 325.5L76.8 328.8L79.5 330.2L83.8 336.2L86.8 339.5L91.8 342.2L105.8 346.5L118.8 346.5L119.2 346.2L133.5 344.8L133.8 344.5L142.2 343.5L144.2 342.8L149.5 342.5L149.8 342.2L152.2 342.2L152.5 341.8L154.8 341.8L157.8 341.2L196.5 341.2L196.8 341.5L209.5 342.5L217.2 336.8L222.8 331.5L226.8 329.2L230.2 326.2L232.5 314.5ZM255.2 313.5L261.5 319.8L263.8 326.2L264.8 327.5L274.5 336.8L279.5 338.2L282.5 338.2L282.8 338.5L327.8 338.5L328.2 338.8L332.8 339.2L339.2 341.2L429.8 341.2L430.2 340.8L433.2 340.8L433.5 340.5L440.2 339.8L442.5 339.2L445.2 336.2L446.5 333.8L448.5 328.5L448.8 325.2L448.5 324.8L448.2 319.8L447.8 319.5L447.8 313.8L447.5 313.5L447.8 313.2L455.8 310.5L465.8 309.8L466.2 309.5L471.8 309.5L471.8 274.8L326.2 274.8L320.2 269.2L313.2 263.8L306.8 268.5L300.2 274.8L274.5 284.8L271.8 286.8L261.5 300.2L255.2 312.8ZM255.2 157.8L255.2 158.5L261.5 171.2L270.5 183.2L272.2 184.8L275.2 186.8L299.8 196.5L306.8 202.8L313.2 207.5L320.2 202.2L326.2 196.5L471.8 196.5L471.8 161.8L465.5 161.8L465.2 161.5L455.5 160.8L447.8 158.2L447.5 157.8L447.8 157.5L447.8 152.2L448.2 151.8L448.8 144.2L447.5 139.8L445.5 135.8L442.5 132.2L438.2 131.2L433.2 130.8L432.8 130.5L338.8 130.5L338.5 130.2L333.2 129.8L332.8 129.5L318.8 128.5L318.5 128.2L314.5 128.2L314.2 127.8L303.5 128.2L303.2 128.5L286.8 128.5L276.2 133.2L272.5 136.2L265.2 143.5L263.8 145.2L261.5 151.5ZM67.2 157.5L67.2 158.2L75.2 170.2L77.2 171.8L79.8 173.2L91.8 184.8L95.2 186.5L104.2 189.8L115.2 192.5L118.2 192.8L121.2 194.2L130.2 196.5L133.8 196.5L138.5 195.5L141.5 194.5L144.5 192.5L158.2 192.5L161.2 194.2L165.2 195.5L174.2 197.5L183.5 198.8L186.8 196.5L192.5 194.8L197.2 192.8L202.2 191.8L208.8 189.8L216.5 186.8L221.8 184.2L227.2 179.5L230.8 174.5L232.5 171.2L232.5 156.5L232.2 156.2L230.8 144.8L225.8 140.5L222.5 138.8L218.5 135.2L209.2 128.8L208.8 129.2L204.5 129.2L204.2 129.5L200.5 129.5L200.2 129.8L197.2 129.8L196.8 130.2L172.2 130.2L171.8 130.5L157.5 130.2L157.2 129.8L154.8 129.8L154.5 129.5L152.2 129.5L149.2 128.8L143.8 128.5L141.8 127.8L131.2 126.5L130.8 126.2L120.5 124.8L120.2 124.5L105.8 123.5L96.5 126.8L86.8 131.8L83.8 135.2L80.5 140.2L79.5 141.2L75.5 143.5L72.8 145.8L68.5 153.8ZM0.2 106.2L0.2 189.5L2.2 189.5L11.5 186.8L22.8 181.8L24.8 180.5L28.5 176.8L31.2 175.5L37.8 170.8L40.8 164.5L47.5 157.8L47.5 145.2L45.5 143.5L41.5 141.2L36.8 136.5L32.5 133.8L28.5 132.5L27.5 131.5L26.2 128.5L23.2 123.8L18.5 118.2L14.5 112.2L10.2 109.5L2.2 106.2ZM15.2 15.5L17.2 19.5L19.8 22.2L21.5 23.2L26.5 24.8L44.5 24.5L44.8 24.2L51.8 24.2L52.2 23.8L66.2 24.2L67.2 24.5L67.5 24.2L77.5 23.8L77.8 23.5L96.2 23.5L96.5 23.2L116.8 22.5L117.2 22.2L172.2 22.2L172.5 22.5L179.5 22.5L179.8 22.8L395.5 22.8L395.8 22.5L404.2 22.5L404.5 22.2L412.5 22.2L412.8 21.8L422.5 21.5L422.8 21.2L430.5 20.5L437.8 18.5L440.5 17.2L442.8 15.2L444.8 14.5L447.5 12.2L449.2 8.8L449.8 6.2L450.2 0.2L17.5 0.2L17.5 3.8L17.2 4.2L16.8 9.2L15.8 14.2Z"/>
<path fill="#ffff00" fill-rule="evenodd" d="M21.8 466.5L21.8 471.8L445.2 471.8L445.2 468.8L441.5 463.2L438.2 460.2L432.8 457.2L426.5 454.8L419.5 453.2L410.5 452.2L410.2 451.8L403.2 451.5L402.8 451.2L397.2 451.2L396.8 450.8L115.2 451.2L114.8 450.8L105.2 450.8L104.8 450.5L96.2 450.5L95.8 450.2L75.2 450.2L74.8 449.8L68.2 449.8L67.8 449.5L54.2 450.2L53.8 450.5L40.2 450.5L39.8 450.8L37.2 450.8L28.8 452.5L25.8 454.2L23.5 456.8L22.5 461.5L22.2 466.2ZM15.8 288.5L8.2 288.2L7.8 287.8L0.2 287.8L0.2 360.8L2.2 360.8L3.5 359.8L9.8 353.5L14.2 347.5L17.8 340.5L17.8 339.8L23.2 334.2L26.2 329.8L27.8 326.5L30.8 325.5L34.2 323.5L35.8 321.5L37.8 316.5L38.2 312.8L36.2 307.5L34.5 300.5L30.8 297.5L28.5 296.2L25.2 292.8L19.8 289.8ZM227.5 300.5L225.5 297.5L221.8 293.5L221.2 292.2L217.8 288.8L215.8 287.5L208.2 284.2L200.2 281.5L196.8 280.8L191.8 278.5L184.2 275.8L177.8 276.2L177.5 276.5L175.2 276.5L174.8 276.8L169.5 277.5L162.5 280.2L157.8 283.2L154.5 280.2L151.8 278.8L148.5 277.8L144.8 277.5L144.5 277.2L130.5 276.5L123.5 278.5L118.5 280.8L117.2 280.8L106.5 283.5L99.2 286.2L95.2 288.2L82.5 300.5L80.5 306.2L75.8 313.2L75.8 313.8L78.8 318.5L80.2 319.8L80.5 321.5L82.8 326.8L86.8 332.5L90.5 336.8L93.5 339.5L105.5 343.5L119.8 343.5L120.2 343.2L131.8 342.2L140.2 340.5L144.2 339.2L153.8 338.8L154.2 338.5L202.5 338.5L202.8 338.8L209.5 339.2L215.8 334.8L223.5 327.2L224.8 326.5L227.5 313.8ZM264.2 314.2L269.2 326.5L274.5 331.5L274.8 332.5L276.8 334.5L280.2 336.2L284.8 337.2L329.5 337.2L329.8 337.5L333.8 337.5L334.2 337.8L337.5 337.8L337.8 338.2L379.8 337.8L380.2 337.5L390.2 337.5L390.5 337.2L414.2 336.8L414.5 336.5L419.2 336.5L419.5 336.2L427.2 335.5L429.8 334.8L432.5 333.2L436.5 329.2L439.8 323.2L441.5 318.2L442.2 314.2L443.2 312.8L449.2 310.5L455.5 308.8L471.8 307.8L471.8 281.2L325.8 281.2L322.8 279.2L316.8 276.2L313.5 274.8L312.5 274.8L280.8 287.5L275.2 291.2L273.5 292.8L267.5 301.2L264.2 312.5ZM264.2 157.5L264.2 159.2L267.5 170.2L273.5 178.5L275.5 180.5L281.5 184.2L312.5 196.5L313.8 196.5L323.5 191.8L325.8 190.2L471.8 190.2L471.8 163.5L466.8 163.5L466.5 163.2L455.2 162.5L450.2 161.2L443.2 158.5L442.2 157.2L441.5 153.2L439.8 148.2L437.2 143.2L431.5 137.5L429.8 136.5L426.8 135.8L419.2 135.2L418.8 134.8L402.5 134.5L402.2 134.2L389.2 134.2L388.8 133.8L378.5 133.8L378.2 133.5L336.8 133.2L336.5 132.8L332.8 132.8L332.5 132.5L324.5 132.2L324.2 131.8L321.5 131.8L321.2 131.5L318.5 131.5L315.2 130.8L310.8 130.8L310.5 131.2L307.5 131.2L307.2 131.5L304.5 131.5L301.5 132.2L286.8 132.2L280.5 133.8L276.2 136.8L274.5 139.8L269.2 145.2ZM75.8 157.8L79.8 163.8L82.5 170.8L95.2 183.2L99.8 185.5L106.2 187.8L118.2 190.5L122.5 192.5L131.8 195.2L139.8 192.5L141.8 191.2L144.5 188.2L157.8 188.2L159.5 189.5L163.8 191.8L170.5 194.2L177.2 194.8L177.5 195.2L180.2 195.2L180.5 195.5L184.5 195.5L196.2 190.8L206.5 187.8L216.5 183.5L220.2 180.5L221.8 177.8L224.2 175.5L227.5 170.8L227.5 156.8L227.2 156.5L226.5 144.8L223.2 142.5L216.2 136.2L209.5 132.2L203.5 132.5L203.2 132.8L198.2 132.8L197.8 133.2L177.2 133.2L176.8 132.8L146.8 132.5L146.5 132.2L144.2 132.2L138.5 130.5L131.8 129.5L128.2 128.5L126.5 128.5L124.5 127.8L120.8 127.5L120.5 127.2L112.5 126.5L112.2 126.2L108.8 126.2L108.5 125.8L105.2 125.8L96.8 129.5L93.2 131.8L90.8 134.2L82.8 144.5L80.5 149.8L80.2 151.5L78.2 153.8ZM0.2 114.8L0.2 187.2L2.5 187.2L9.5 184.8L12.2 183.5L15.2 182.8L21.5 179.8L25.5 176.5L28.5 172.5L31.5 170.5L34.5 165.8L38.2 158.5L38.2 144.8L33.5 139.8L28.5 136.8L24.8 133.8L21.5 132.2L17.2 125.8L13.2 121.8L8.8 119.5L2.8 115.2ZM21.8 0.2L21.8 4.8L22.2 5.2L22.2 7.5L23.5 14.5L24.2 15.8L27.8 18.5L31.2 19.5L36.5 20.2L36.8 20.5L39.2 20.5L39.5 20.8L58.8 21.2L59.2 21.5L64.8 21.5L65.2 21.8L76.2 21.5L76.5 21.2L97.2 21.2L97.5 20.8L116.5 20.5L116.8 20.2L172.5 20.2L172.8 20.5L182.8 20.5L183.2 20.8L391.2 20.8L391.5 20.5L403.5 20.2L403.8 19.8L407.2 19.8L407.5 19.5L410.5 19.5L410.8 19.2L417.8 18.5L425.5 16.8L430.5 15.2L436.8 12.2L439.5 10.2L442.8 6.5L445.2 2.5L445.2 0.2Z"/>
<path fill="#80ff00" fill-rule="evenodd" d="M26.2 468.2L26.2 471.8L439.8 471.8L439.8 468.8L437.5 465.8L433.5 462.5L429.5 460.2L421.2 457.2L414.8 455.5L407.8 454.2L403.2 453.8L402.8 453.5L398.2 453.5L397.8 453.2L393.2 453.2L392.8 452.8L113.5 453.2L113.2 452.8L97.5 452.8L97.2 452.5L71.5 452.5L71.2 452.2L65.2 452.2L64.8 452.5L60.8 452.5L60.5 452.8L40.8 454.2L34.8 455.8L31.8 457.8L29.2 460.8L27.5 463.8ZM15.2 289.8L0.2 289.2L0.2 352.2L2.2 352.2L3.2 351.5L7.8 346.8L10.8 342.5L12.2 339.5L19.8 331.8L22.8 327.8L23.2 326.8L25.5 324.5L27.8 320.2L31.2 316.8L33.2 313.5L31.5 307.8L30.2 300.5L28.2 299.2L26.5 296.8L22.8 293.5ZM269.2 313.5L274.2 325.5L274.5 327.2L276.2 330.5L279.8 333.8L282.8 335.2L286.8 336.2L316.2 336.2L316.5 335.8L343.5 336.2L343.8 335.8L351.2 335.8L351.5 335.5L373.5 335.2L373.8 334.8L380.2 334.8L380.5 334.5L383.8 334.5L384.2 334.2L387.2 334.2L390.5 333.5L399.5 333.2L399.8 332.8L403.8 332.8L404.2 332.5L416.8 331.5L423.5 329.5L429.5 326.5L434.2 320.5L436.5 315.8L437.2 313.5L441.8 310.8L448.8 308.5L455.2 307.2L463.8 306.8L464.2 306.5L471.8 306.5L471.8 287.8L326.2 287.8L321.2 284.2L313.2 279.8L293.8 287.5L291.8 288.8L286.5 291.2L279.5 295.8L274.2 300.8L271.2 307.5ZM81.8 313.5L84.5 320.5L87.2 325.5L91.2 330.8L93.2 332.8L94.2 334.8L97.8 337.8L105.2 340.5L121.2 340.5L121.5 340.2L130.2 339.5L130.5 339.2L135.8 338.8L138.8 338.2L145.8 337.8L146.2 337.5L152.8 337.5L153.2 337.2L206.5 336.8L206.8 336.5L209.5 336.5L211.2 335.5L216.5 331.2L220.8 326.5L221.5 319.2L221.8 318.8L221.8 315.8L222.2 315.5L222.2 300.2L220.8 297.2L218.8 294.2L215.8 291.2L212.8 289.2L204.5 285.5L196.8 283.2L190.5 280.2L184.2 277.8L179.2 278.2L169.5 280.2L163.8 282.8L159.5 285.8L157.8 287.5L157.2 287.2L156.2 284.8L154.8 283.2L152.2 281.2L149.5 279.8L144.8 278.5L138.5 278.5L138.2 278.2L132.5 278.2L131.8 277.8L126.2 279.5L118.5 283.2L105.2 286.5L101.2 288.2L97.8 290.2L94.5 293.2L93.2 295.2L87.5 300.8L84.2 307.2ZM269.2 157.8L270.5 162.2L274.5 171.2L279.5 175.5L285.8 179.8L294.5 184.2L312.8 191.5L317.8 189.2L325.8 183.8L471.8 183.8L471.8 164.8L463.2 164.8L462.8 164.5L454.8 164.2L447.5 162.5L441.8 160.5L437.2 157.8L436.5 155.5L434.2 150.8L429.8 145.2L424.2 142.2L416.5 139.8L407.5 139.2L407.2 138.8L403.5 138.8L403.2 138.5L399.5 138.5L399.2 138.2L390.2 137.8L389.8 137.5L379.8 136.8L379.5 136.5L342.5 135.5L342.2 135.2L337.5 135.2L337.2 134.8L328.2 134.2L327.8 133.8L313.5 133.2L313.2 132.8L312.5 133.2L306.5 133.2L306.2 133.5L287.2 133.5L280.5 136.2L277.2 139.2L275.2 142.5L274.8 144.2ZM81.8 157.8L83.8 163.5L87.5 170.5L93.2 176.2L94.2 177.8L98.2 181.5L105.8 185.2L118.2 188.2L123.5 190.8L131.5 193.5L136.5 191.8L139.8 189.8L142.8 186.8L143.8 184.8L144.8 183.8L157.8 183.8L159.8 185.8L163.2 188.2L168.5 190.8L171.5 191.8L174.8 192.2L176.8 192.8L178.8 192.8L181.2 193.5L184.5 193.5L194.5 189.5L196.8 188.2L197.8 188.2L207.2 184.8L213.5 181.8L215.5 180.5L218.8 177.2L222.2 171.5L222.2 144.8L217.8 140.2L213.2 136.5L209.8 134.5L179.8 134.8L179.5 134.5L156.8 134.5L156.5 134.2L144.2 133.8L143.8 133.5L132.8 132.5L118.8 129.5L105.8 127.8L99.8 130.5L95.8 133.5L94.2 135.8L93.2 138.5L91.2 140.5L87.2 145.8L84.8 150.2ZM0.2 121.8L0.2 184.8L2.5 184.8L8.8 182.5L15.2 180.8L20.5 177.8L24.8 173.8L26.8 170.8L27.8 166.5L30.5 162.8L33.2 157.8L33.2 145.2L30.5 142.5L28.8 141.5L25.5 137.8L22.5 135.5L18.8 133.5L15.5 132.5L8.5 125.5L2.2 121.8ZM26.2 0.2L26.5 4.5L28.8 10.2L31.8 13.5L34.8 15.5L40.5 17.2L42.8 17.2L43.2 17.5L55.8 18.2L56.2 18.5L64.2 18.8L64.5 19.2L99.2 18.8L99.5 18.5L115.5 18.5L115.8 18.2L393.8 18.5L394.2 18.2L403.2 17.8L403.5 17.5L410.2 16.8L417.8 15.2L424.5 13.2L428.8 11.5L434.5 8.2L438.2 4.8L439.8 2.5L439.8 0.2Z"/>
<path fill="#00ff00" fill-rule="evenodd" d="M30.8 468.8L30.8 471.8L434.8 471.8L434.5 468.5L429.5 464.5L424.8 462.2L416.5 459.2L404.5 456.2L395.2 455.5L394.8 455.2L104.2 455.2L103.8 454.8L64.8 454.8L64.5 455.2L52.2 456.2L41.2 458.5L36.2 461.8L33.8 464.2ZM15.5 291.5L0.2 290.5L0.2 345.5L2.2 345.5L4.8 342.8L6.5 340.2L15.5 331.2L18.8 326.8L23.2 323.2L25.5 319.8L27.8 314.2L27.8 310.2L27.5 309.8L27.5 305.8L27.2 305.5L26.8 300.2L22.5 295.5L20.2 293.8ZM274.5 314.8L275.5 319.5L275.8 326.2L276.8 328.2L278.5 330.5L280.5 332.2L282.8 333.5L286.8 334.8L318.2 334.8L318.5 334.5L341.8 334.2L342.2 333.8L346.8 333.8L347.2 333.5L351.2 333.5L351.5 333.2L358.2 333.2L358.5 332.8L365.2 332.8L365.5 332.5L371.5 332.5L371.8 332.2L380.2 331.8L380.5 331.5L388.5 330.5L390.5 329.8L401.5 328.8L401.8 328.5L408.5 327.8L416.8 326.2L421.8 323.5L429.2 318.2L431.8 313.8L433.5 312.2L437.5 309.8L441.8 308.2L446.8 306.8L452.2 305.8L454.2 305.8L454.5 305.5L471.8 304.8L471.8 290.8L324.8 290.8L320.2 289.5L313.5 285.2L312.5 285.2L306.8 287.5L303.2 290.5L296.8 293.8L292.2 295.8L286.8 297.5L283.2 300.5L280.5 301.8L277.5 304.8L275.8 307.8L274.5 312.2ZM85.5 313.5L88.2 319.2L93.2 326.5L93.8 328.8L95.8 332.2L99.8 335.8L105.5 338.2L123.5 338.2L123.8 337.8L129.5 337.8L129.8 337.5L133.5 337.5L133.8 337.2L136.8 337.2L137.2 336.8L140.2 336.8L140.5 336.5L151.2 336.2L151.5 335.8L186.5 335.8L186.8 335.5L201.2 335.2L201.5 334.8L204.5 334.8L209.8 333.8L212.8 331.5L217.8 326.5L218.5 323.5L218.8 318.8L219.2 318.5L219.2 316.2L219.5 315.8L219.5 300.2L216.2 295.2L210.2 290.5L203.8 287.8L196.8 285.5L190.8 282.5L184.2 279.8L181.8 279.8L176.8 280.8L169.5 282.8L165.8 284.8L159.8 289.5L157.5 290.8L153.8 284.8L151.5 282.8L147.8 280.8L144.8 279.8L131.5 279.5L125.2 281.8L118.5 285.5L105.5 288.8L100.2 291.8L94.8 297.2L93.5 299.8L88.8 306.5ZM275.8 145.5L275.8 148.8L275.5 149.2L275.5 151.8L274.5 156.8L274.5 159.2L275.8 163.5L278.5 167.8L281.5 170.2L283.2 170.8L286.8 173.8L294.5 176.5L303.2 180.8L306.8 183.8L312.5 186.2L314.2 185.8L320.2 181.8L325.2 180.5L471.8 180.5L471.8 166.5L464.5 166.5L464.2 166.2L454.2 165.8L453.8 165.5L448.2 164.8L439.8 162.5L433.5 159.2L431.8 157.5L429.5 153.5L421.8 147.8L416.8 145.2L412.2 144.2L401.5 142.8L401.2 142.5L398.8 142.5L398.5 142.2L390.2 141.5L386.5 140.5L384.5 140.5L379.8 139.5L376.8 139.5L376.5 139.2L350.8 138.2L350.5 137.8L337.8 137.2L335.5 136.5L328.2 135.8L327.8 135.5L324.5 135.5L324.2 135.2L309.8 134.5L309.5 134.8L302.5 134.8L302.2 135.2L286.5 135.2L280.8 138.2L277.5 141.8ZM85.8 157.2L85.8 158.8L89.2 165.5L92.8 170.5L94.8 174.2L99.2 178.8L101.5 180.5L105.5 182.5L118.5 185.8L123.5 188.8L131.5 191.8L132.8 191.5L137.8 188.8L140.2 186.8L141.8 184.5L144.5 181.8L151.2 181.5L156.5 180.5L157.8 180.5L164.2 185.5L170.2 188.8L183.5 191.8L193.2 187.8L196.8 185.8L204.8 183.2L210.8 180.5L214.5 177.8L216.5 175.8L219.5 171.5L219.5 144.8L215.2 140.5L209.5 136.5L180.5 136.5L180.2 136.2L174.5 136.2L174.2 135.8L146.5 135.5L146.2 135.2L141.8 135.2L141.5 134.8L129.8 133.8L124.8 132.8L119.8 132.5L109.8 130.5L105.5 130.2L100.8 132.5L96.8 136.5L94.5 140.5L93.2 144.8L89.5 149.8ZM0.2 127.2L0.2 182.8L2.2 182.8L15.8 178.5L19.8 175.8L23.8 171.8L24.8 169.8L27.8 158.8L27.8 144.8L25.8 141.8L20.2 136.8L16.5 134.8L8.5 132.2L6.2 129.8L2.5 127.2ZM30.8 0.2L30.8 2.5L33.5 6.8L36.5 9.8L41.2 12.8L51.8 15.2L57.5 15.5L60.8 16.2L64.2 16.2L64.5 16.5L110.8 16.5L111.2 16.2L391.2 16.5L391.5 16.2L403.2 15.5L416.8 12.2L424.2 9.5L429.5 6.8L434.8 2.5L434.8 0.2Z"/>
<path fill="#00ff96" fill-rule="evenodd" d="M36.2 468.5L36.2 471.8L429.5 471.8L429.5 468.8L424.5 465.8L417.8 462.8L399.5 458.2L393.2 457.5L392.8 457.2L386.8 457.2L386.5 456.8L77.8 456.8L77.5 457.2L66.5 457.2L66.2 457.5L63.8 457.5L63.5 457.8L61.5 457.8L61.2 458.2L54.2 459.2L46.8 461.2L40.5 464.2ZM277.5 326.2L280.5 330.2L282.8 331.8L286.5 333.5L319.5 333.5L319.8 333.2L332.5 332.8L332.8 332.5L337.2 332.5L337.5 332.2L348.2 331.5L351.5 330.8L356.2 330.8L356.5 330.5L361.2 330.5L361.5 330.2L366.2 330.2L366.5 329.8L378.2 329.2L386.5 327.5L389.2 326.5L395.2 325.2L404.8 321.5L412.2 320.5L412.5 320.2L414.5 320.2L414.8 319.8L416.8 319.8L427.8 311.5L429.5 310.8L432.2 308.8L437.8 306.5L443.5 305.2L449.8 304.5L450.2 304.2L452.8 304.2L453.2 303.8L471.8 303.5L471.8 294.2L323.8 294.2L323.5 294.5L320.8 294.5L317.8 295.2L315.8 296.2L314.2 297.8L313.2 300.5L299.8 300.5L299.5 300.8L292.5 301.2L292.2 301.5L287.8 301.8L283.2 304.2L279.8 307.5L278.2 310.2L276.8 313.5L277.2 313.8L277.2 318.5L277.5 318.8ZM14.8 292.8L0.2 291.8L0.2 339.2L2.2 339.2L11.2 330.8L15.2 326.2L19.5 323.5L23.2 319.5L26.2 313.5L24.8 300.2L19.8 295.5ZM89.5 312.8L89.5 313.8L93.5 320.8L95.2 326.5L96.8 329.5L100.2 333.2L105.5 336.2L123.2 336.5L123.5 336.2L129.8 336.2L130.2 335.8L134.5 335.8L134.8 335.5L142.5 335.2L142.8 334.8L149.5 334.8L149.8 334.5L184.8 334.5L185.2 334.2L197.8 333.8L209.5 331.5L215.2 326.2L216.2 318.5L216.8 316.2L216.8 314.2L217.2 313.8L217.2 300.5L215.8 298.5L210.2 293.2L201.2 289.2L196.5 287.8L190.5 284.5L184.2 281.8L179.2 282.5L170.2 285.2L166.8 287.2L163.5 290.2L157.8 294.2L156.8 293.2L152.8 286.2L150.2 283.8L144.8 281.2L131.5 281.2L121.8 285.5L118.5 287.8L105.8 291.2L101.8 293.5L98.2 296.8L95.5 300.5L93.5 306.2ZM277.5 145.2L277.5 152.5L277.2 152.8L277.2 157.5L276.8 157.8L277.8 160.5L279.8 163.8L283.2 167.2L286.5 169.2L289.5 169.8L291.8 169.8L292.2 170.2L298.8 170.5L299.2 170.8L312.8 170.8L314.8 174.5L316.8 175.8L320.5 176.8L322.8 176.8L323.2 177.2L471.8 177.2L471.8 168.2L452.8 167.5L452.5 167.2L447.2 166.8L438.8 165.2L434.2 163.5L429.5 160.5L427.2 159.5L422.8 155.8L416.5 151.5L414.5 151.5L414.2 151.2L412.2 151.2L411.8 150.8L404.8 149.8L393.8 145.8L377.8 142.2L365.8 141.5L365.5 141.2L360.8 141.2L360.5 140.8L355.5 140.8L355.2 140.5L351.2 140.5L350.8 140.2L347.8 140.2L347.5 139.8L344.5 139.8L344.2 139.5L340.8 139.5L340.5 139.2L338.2 139.2L336.2 138.5L328.2 137.5L327.8 137.2L317.2 136.5L316.8 136.2L287.2 136.5L284.8 137.5L281.8 139.5L279.8 141.5ZM89.5 157.5L89.5 158.5L90.5 160.5L93.2 164.5L95.8 171.5L97.8 174.2L101.8 177.8L105.5 180.2L113.5 182.5L118.5 183.5L124.2 187.2L131.5 190.2L132.8 189.8L137.5 186.8L142.5 181.5L144.8 179.8L147.2 179.8L152.5 178.8L157.5 177.2L162.2 180.2L166.8 184.2L170.8 186.5L183.5 189.8L189.8 187.2L196.8 183.5L203.8 181.2L210.2 178.2L213.8 175.2L217.2 170.8L217.2 145.2L212.2 140.5L209.8 138.8L208.5 138.5L180.8 138.2L180.5 137.8L171.8 137.5L171.5 137.2L143.2 136.8L142.8 136.5L131.8 135.8L124.8 134.5L111.2 133.2L105.8 132.2L101.5 134.8L97.8 138.8L95.2 143.8L93.2 151.5L91.8 153.2ZM0.2 132.2L0.2 180.8L2.2 180.8L4.5 179.8L5.5 179.8L8.8 178.5L15.2 176.8L18.5 174.5L22.2 170.8L25.8 158.2L25.5 145.2L20.2 139.5L17.2 137.5L14.5 136.2L2.5 132.2ZM36.2 0.2L36.2 2.8L40.8 7.5L45.8 9.8L53.8 12.2L60.8 13.2L61.2 13.5L65.8 13.8L66.2 14.2L75.2 14.2L75.5 14.5L388.8 14.5L389.2 14.2L393.2 14.2L393.5 13.8L397.8 13.5L415.8 9.2L421.8 6.8L429.5 2.5L429.5 0.2Z"/>
<path fill="#00ffff" fill-rule="evenodd" d="M41.2 468.8L41.2 471.8L423.2 471.8L423.2 469.2L417.2 465.8L404.5 462.8L400.5 461.2L392.2 459.2L389.8 459.2L389.5 458.8L384.2 458.8L383.8 458.5L80.8 458.5L80.5 458.8L74.8 458.8L74.5 459.2L66.8 459.5L57.2 461.5L49.2 464.2L44.5 466.5ZM279.2 326.2L282.8 330.2L287.2 332.5L313.8 332.5L314.2 332.2L325.8 331.8L326.2 331.5L329.8 331.5L330.2 331.2L332.8 331.2L333.2 330.8L335.5 330.8L340.8 329.8L348.8 329.2L351.5 328.5L378.2 326.2L391.2 319.5L396.5 317.5L403.8 313.2L416.8 313.2L421.5 308.5L424.8 306.8L432.2 304.5L439.2 303.2L444.8 302.8L445.2 302.5L449.5 302.5L449.8 302.2L471.8 301.8L471.8 297.5L325.2 297.5L320.8 299.5L319.2 300.8L314.2 302.2L298.8 302.5L287.2 304.8L285.2 306.2L281.8 309.5L279.5 313.5ZM15.2 294.5L5.2 293.8L4.8 293.5L0.2 293.5L0.2 334.8L2.2 334.8L10.8 326.2L15.2 324.2L17.5 322.5L21.2 318.8L24.2 313.8L22.8 300.2L18.2 296.2ZM93.2 312.8L93.2 314.2L94.8 317.8L97.5 326.8L99.2 329.2L101.8 331.8L105.5 334.2L114.8 334.5L115.2 334.8L122.8 334.8L123.2 334.5L130.8 334.5L131.2 334.2L146.8 333.5L147.2 333.2L183.8 333.2L184.2 332.8L195.8 332.5L196.2 332.2L201.5 331.5L208.2 329.5L212.2 326.5L214.5 314.2L214.5 300.5L209.2 295.2L202.8 292.2L196.2 289.8L191.5 287.2L184.2 283.8L179.8 284.5L171.5 287.2L163.5 293.8L158.8 296.8L157.5 297.2L154.8 293.2L152.2 287.8L148.2 284.2L144.8 282.5L131.5 282.8L124.8 285.8L118.8 289.8L105.8 293.5L102.8 295.5L98.2 300.5ZM279.2 145.2L279.5 157.8L281.8 161.8L286.5 166.2L290.8 167.5L296.2 168.5L298.2 168.5L298.5 168.8L313.8 169.2L319.2 170.5L322.5 172.8L325.2 173.8L471.8 173.8L471.8 169.5L455.2 169.5L454.8 169.2L449.2 169.2L448.8 168.8L441.2 168.5L440.8 168.2L434.8 167.5L427.5 165.2L426.5 165.2L420.5 162.2L416.8 158.2L403.8 158.2L400.8 156.2L394.2 152.8L391.8 152.2L378.2 145.2L376.5 145.2L376.2 144.8L351.2 142.8L348.5 142.2L338.5 141.2L333.5 139.8L331.8 139.8L325.5 138.5L314.5 137.8L314.2 137.5L309.8 137.5L309.5 137.8L287.2 137.8L283.8 139.8L280.2 143.5ZM93.2 157.5L93.5 159.5L98.5 171.5L102.8 175.8L106.5 178.2L118.8 181.5L124.2 185.2L131.2 188.5L131.8 188.5L134.8 186.8L141.5 180.2L143.8 178.5L145.5 177.8L149.8 177.2L154.8 175.5L157.2 174.2L158.2 174.2L163.8 177.8L170.8 183.8L176.2 185.8L183.5 187.8L188.2 185.5L188.8 185.5L195.5 181.8L202.2 179.5L209.2 176.2L214.5 170.8L214.5 145.2L209.5 140.8L207.2 140.8L206.8 140.5L196.8 140.2L196.5 139.8L180.8 139.8L180.5 139.5L174.2 139.2L173.8 138.8L145.5 138.5L145.2 138.2L131.5 137.5L131.2 137.2L124.8 136.5L120.2 135.5L105.5 134.5L103.5 135.8L99.8 139.5L97.8 142.5L96.5 145.5L95.5 150.8ZM0.2 134.5L0.2 178.8L2.2 178.8L15.2 174.8L19.8 170.8L23.5 158.8L23.5 153.5L23.2 153.2L22.8 145.2L18.5 140.8L14.8 138.5L2.8 134.5ZM41.2 0.2L41.2 2.5L44.5 4.8L49.2 7.2L55.8 9.5L62.8 11.2L64.5 11.2L66.5 11.8L69.5 11.8L69.8 12.2L79.2 12.5L79.5 12.8L92.5 12.8L92.8 13.2L377.8 13.2L378.2 12.8L390.2 12.5L397.2 11.2L404.5 8.5L416.2 5.8L423.2 2.5L423.2 0.2Z"/>
<path fill="#0096ff" fill-rule="evenodd" d="M47.8 468.8L47.8 471.8L416.5 471.8L416.5 468.8L404.8 466.2L398.5 463.2L391.8 461.2L383.5 460.5L383.2 460.2L379.5 460.2L379.2 459.8L90.2 459.8L89.8 460.2L77.5 460.5L77.2 460.8L74.2 460.8L73.8 461.2L71.5 461.2L71.2 461.5L65.5 462.2L56.2 464.8ZM280.8 326.5L284.2 329.5L287.2 331.2L315.2 331.2L315.5 330.8L325.5 330.5L325.8 330.2L333.2 329.5L338.5 328.2L345.2 327.5L345.5 327.2L353.2 326.2L363.2 324.2L376.2 320.5L390.5 313.5L390.5 300.5L326.2 300.5L321.8 302.2L314.2 303.8L300.2 304.2L295.2 305.2L287.2 307.8L284.2 310.5L282.2 313.2ZM15.5 296.2L11.2 295.8L10.8 295.5L7.5 295.5L7.2 295.2L3.8 295.2L3.5 294.8L0.2 294.8L0.2 330.5L2.2 330.5L7.5 325.5L15.8 321.5L19.8 317.5L22.5 313.2L22.2 312.8L21.2 301.2L18.5 298.2ZM95.5 313.5L96.8 316.5L99.5 326.5L102.8 330.2L105.8 332.2L111.8 332.5L112.2 332.8L116.8 332.8L117.2 333.2L121.8 333.2L122.2 332.8L131.8 332.8L132.2 332.5L143.8 332.2L144.2 331.8L188.5 331.5L188.8 331.2L196.8 330.8L204.2 328.8L209.5 326.2L211.8 314.5L211.8 300.5L208.2 297.2L198.2 292.5L193.8 291.2L189.8 289.2L187.8 287.5L187.2 287.5L184.2 285.8L182.5 285.8L177.2 287.5L171.2 291.5L164.5 296.8L158.8 300.2L157.5 300.5L152.5 292.5L150.2 287.5L147.8 285.5L144.8 283.8L133.5 284.2L130.5 284.8L126.5 286.8L122.8 289.8L118.5 292.2L110.8 294.2L104.8 296.5L100.5 300.8ZM280.8 144.8L281.8 156.8L282.8 159.2L287.5 163.8L296.5 166.5L299.8 166.8L300.2 167.2L313.8 167.5L320.5 168.8L326.2 170.8L390.5 170.8L390.5 157.8L377.8 151.5L364.5 147.5L352.8 145.2L338.5 143.2L327.8 140.5L316.2 139.5L315.8 139.2L286.8 139.5L284.8 140.8ZM95.5 157.8L100.5 170.5L103.2 173.5L106.5 175.8L117.5 179.2L118.5 179.2L123.2 181.8L125.8 184.2L131.2 186.8L132.2 186.8L134.5 185.2L137.2 181.8L140.2 178.8L144.8 176.2L145.8 176.2L151.8 174.2L157.5 170.8L162.8 173.5L168.5 177.5L170.2 179.2L177.2 183.8L183.5 185.8L187.8 183.8L190.5 181.8L193.2 180.5L199.8 178.2L208.8 173.8L211.8 170.8L211.8 144.8L209.2 142.8L206.8 142.8L206.5 142.5L203.5 142.5L203.2 142.2L200.2 142.2L199.8 141.8L183.5 141.8L183.2 141.5L180.8 141.5L180.5 141.2L175.5 140.8L172.5 140.2L151.8 140.2L151.5 139.8L135.5 139.5L135.2 139.2L131.2 139.2L130.8 138.8L120.5 137.5L120.2 137.2L105.8 136.5L101.2 140.8L98.5 145.2L97.5 151.5ZM0.2 136.5L0.2 176.8L2.2 176.8L15.2 172.8L17.5 170.8L20.8 160.5L21.5 156.8L21.2 156.5L21.2 153.2L20.8 152.8L20.2 145.2L17.2 142.2L14.5 140.5L2.5 136.5ZM47.8 0.2L47.8 2.5L55.2 6.2L62.5 8.5L68.8 9.8L73.5 10.2L73.8 10.5L80.5 10.8L80.8 11.2L88.5 11.2L88.8 11.5L379.8 11.5L380.2 11.2L390.5 10.5L399.5 7.8L404.8 5.2L416.5 2.5L416.5 0.2Z"/>
<path fill="#0050ff" fill-rule="evenodd" d="M54.2 468.8L54.2 471.8L403.5 471.8L403.5 468.8L401.2 467.2L397.2 465.2L390.2 462.8L383.5 462.2L383.2 461.8L380.5 461.8L380.2 461.5L88.2 461.5L87.8 461.8L78.5 462.2L78.2 462.5L76.2 462.5L75.8 462.8L68.5 463.8L60.5 466.2ZM282.5 326.5L286.8 329.8L316.5 329.8L316.8 329.5L327.8 328.8L336.2 327.2L351.8 321.8L364.2 318.8L372.5 315.8L377.5 313.5L377.5 313.2L373.5 310.2L366.8 307.5L359.5 305.8L349.5 304.8L349.2 304.5L325.8 303.2L322.8 304.2L317.2 304.8L316.8 305.2L314.5 305.2L314.2 305.5L299.5 306.2L290.8 308.8L287.5 310.5L284.8 313.2L283.2 320.2ZM15.2 297.5L0.2 296.2L0.2 326.2L2.5 326.2L5.5 324.2L11.5 321.2L15.2 319.8L20.2 314.2L20.5 311.8L20.2 311.5L19.2 301.2L17.5 299.2ZM98.2 313.2L100.5 320.8L101.5 326.2L105.2 329.8L107.2 330.5L120.8 331.5L121.2 331.2L132.8 331.2L133.2 330.8L140.8 330.8L141.2 330.5L187.5 330.2L187.8 329.8L195.5 329.5L202.5 327.5L205.2 326.2L209.2 314.2L209.2 300.5L199.2 295.2L190.8 292.5L187.5 290.8L183.8 287.8L183.2 287.8L165.2 300.2L162.2 301.5L157.5 302.8L154.2 298.8L149.5 290.5L148.5 287.8L146.2 285.8L144.8 285.2L132.5 285.8L129.2 287.2L125.5 290.8L120.8 293.5L105.8 298.2L103.2 300.8ZM282.5 144.8L283.2 151.2L284.5 157.5L286.5 160.2L287.8 161.2L292.5 163.2L299.5 165.2L313.8 165.8L314.2 166.2L320.8 166.8L325.5 168.2L345.8 167.2L346.2 166.8L349.5 166.8L349.8 166.5L357.5 165.8L365.8 164.2L370.8 162.5L374.2 160.8L377.5 158.2L377.5 157.8L373.2 155.8L362.8 152.2L354.2 149.8L351.5 149.5L337.2 144.5L326.2 141.8L313.8 140.8L313.5 140.5L309.8 140.5L309.5 140.8L287.2 140.8L285.2 142.2ZM100.2 145.8L100.2 148.2L98.2 158.2L103.5 171.2L106.5 173.5L115.8 176.5L116.8 176.5L123.5 179.2L125.5 180.5L128.5 183.8L131.2 185.2L132.2 185.2L133.5 184.2L136.2 179.8L139.5 176.8L142.5 175.2L149.5 172.8L157.5 168.5L164.5 170.8L183.5 183.8L185.2 182.2L188.2 180.2L191.8 178.5L198.5 176.5L204.8 173.5L209.2 170.8L209.2 145.2L208.2 144.8L198.8 143.8L198.5 143.5L183.2 143.5L182.8 143.2L174.2 142.2L173.8 141.8L171.5 141.8L171.2 141.5L135.2 141.2L134.8 140.8L130.8 140.8L120.5 138.8L105.5 138.8L101.5 143.2ZM0.2 138.8L0.2 174.8L2.2 174.8L12.2 171.5L13.2 171.5L15.2 170.5L19.2 158.8L19.2 155.8L18.8 155.5L18.8 152.8L18.5 152.5L17.5 144.8L14.8 142.8L2.8 138.8ZM54.2 0.2L54.2 2.5L64.5 6.5L75.8 8.8L81.2 9.2L81.5 9.5L87.2 9.5L87.5 9.8L380.5 9.8L380.8 9.5L383.5 9.5L383.8 9.2L386.2 9.2L386.5 8.8L391.8 8.2L396.5 6.5L401.8 3.8L403.5 2.5L403.5 0.2Z"/>
<path fill="#0000ff" fill-rule="evenodd" d="M60.5 469.2L60.5 471.8L399.2 471.8L399.2 468.8L394.8 466.5L390.5 464.8L387.2 464.5L385.2 463.8L383.2 463.8L382.8 463.5L380.8 463.5L380.5 463.2L378.5 463.2L378.2 462.8L92.2 462.8L91.8 463.2L87.2 463.2L86.8 463.5L82.5 463.5L82.2 463.8L77.2 464.2L67.2 466.5ZM364.5 313.5L361.2 311.8L352.2 309.2L345.2 307.8L340.8 307.5L340.5 307.2L332.2 306.5L331.8 306.2L328.5 306.2L328.2 305.8L324.8 305.8L322.2 306.5L314.8 306.8L314.5 307.2L300.8 307.8L293.5 310.2L287.2 313.5L284.8 321.5L284.2 326.5L287.5 328.8L313.2 328.8L313.5 328.5L317.2 328.5L317.5 328.2L327.2 327.5L331.8 326.5L338.8 321.8L352.8 317.2L356.2 316.5ZM15.8 299.5L13.8 298.8L11.2 298.8L7.8 298.2L0.2 297.8L0.2 323.5L2.5 323.5L10.2 319.5L14.8 317.8L18.5 313.8L18.5 310.8L18.2 310.5L17.2 300.8ZM100.8 313.2L103.8 326.5L105.8 328.2L107.2 328.5L115.5 329.2L115.8 329.5L135.2 329.5L135.5 329.2L151.8 329.2L152.2 328.8L186.5 328.8L186.8 328.5L193.8 328.2L194.2 327.8L196.5 327.8L200.8 326.2L204.8 314.2L204.8 300.5L196.5 296.2L194.8 296.2L190.5 295.2L183.2 292.2L170.5 300.8L162.5 303.8L157.5 304.8L152.8 300.2L150.5 296.2L146.5 288.2L146.5 287.5L144.8 286.5L131.8 287.5L129.5 291.2L125.5 294.2L105.8 300.5ZM284.2 144.8L284.8 149.8L287.2 157.8L292.5 160.8L300.2 163.5L318.2 164.5L318.5 164.8L321.5 164.8L324.5 165.5L328.8 165.5L329.2 165.2L338.5 164.5L338.8 164.2L340.8 164.2L341.2 163.8L343.2 163.8L343.5 163.5L345.5 163.5L350.8 162.5L360.5 159.8L364.5 157.8L338.8 149.5L331.8 144.8L326.5 143.5L315.2 142.5L314.8 142.2L287.2 142.2ZM0.2 140.8L0.2 172.8L2.2 172.8L8.5 170.8L14.5 165.2L15.2 164.2L17.2 158.2L17.2 157.2L16.8 156.8L16.8 154.8L16.5 154.5L15.2 145.5L14.5 144.8L2.5 140.8ZM102.2 145.2L102.2 148.2L101.8 148.5L101.8 151.2L101.5 151.5L100.8 158.2L105.8 170.8L117.5 174.8L123.2 176.2L127.5 178.5L130.8 181.8L131.8 183.5L132.8 180.5L134.2 178.5L136.8 175.8L141.2 173.5L146.2 172.2L149.5 170.5L151.2 169.2L157.2 166.5L162.5 167.5L168.2 169.5L170.8 170.8L183.5 179.5L184.2 178.8L188.5 176.8L193.5 175.5L196.5 175.2L204.8 170.8L204.8 156.8L204.5 155.5L201.5 149.2L198.8 146.5L196.5 145.2L182.8 145.2L180.8 144.5L172.8 143.5L172.5 143.2L135.2 142.8L134.8 142.5L130.5 142.5L118.8 140.2L117.8 140.5L105.8 140.8ZM60.5 0.2L60.5 2.5L68.2 5.2L78.8 7.5L91.2 8.2L91.5 8.5L378.5 8.5L378.8 8.2L380.8 8.2L381.2 7.8L383.2 7.8L383.5 7.5L390.5 6.5L394.2 5.2L399.2 2.5L399.2 0.2Z"/>
<path stroke="#000" stroke-width="2.35" fill="none" d="M2.18 1.32V470.06M1.00 2.50H469.73M15.13 1.32V470.06M1.00 15.45H469.73M28.09 1.32V470.06M1.00 28.41H469.73M41.04 1.32V470.06M1.00 41.37H469.73M54.00 1.32V470.06M1.00 54.32H469.73M66.95 1.32V470.06M1.00 67.28H469.73M79.91 1.32V470.06M1.00 80.23H469.73M92.86 1.32V470.06M1.00 93.19H469.73M105.81 1.32V470.06M1.00 106.14H469.73M118.77 1.32V470.06M1.00 119.09H469.73M131.73 1.32V470.06M1.00 132.05H469.73M144.68 1.32V470.06M1.00 145.00H469.73M157.64 1.32V470.06M1.00 157.96H469.73M170.59 1.32V470.06M1.00 170.91H469.73M183.55 1.32V470.06M1.00 183.87H469.73M196.50 1.32V470.06M1.00 196.82H469.73M209.46 1.32V470.06M1.00 209.78H469.73M222.41 1.32V470.06M1.00 222.74H469.73M235.37 1.32V470.06M1.00 235.69H469.73M248.32 1.32V470.06M1.00 248.64H469.73M261.28 1.32V470.06M1.00 261.60H469.73M274.23 1.32V470.06M1.00 274.56H469.73M287.19 1.32V470.06M1.00 287.51H469.73M300.14 1.32V470.06M1.00 300.46H469.73M313.10 1.32V470.06M1.00 313.42H469.73M326.05 1.32V470.06M1.00 326.38H469.73M339.00 1.32V470.06M1.00 339.33H469.73M351.96 1.32V470.06M1.00 352.29H469.73M364.92 1.32V470.06M1.00 365.24H469.73M377.87 1.32V470.06M1.00 378.19H469.73M390.82 1.32V470.06M1.00 391.15H469.73M403.78 1.32V470.06M1.00 404.11H469.73M416.74 1.32V470.06M1.00 417.06H469.73M429.69 1.32V470.06M1.00 430.01H469.73M442.65 1.32V470.06M1.00 442.97H469.73M455.60 1.32V470.06M1.00 455.93H469.73M468.56 1.32V470.06M1.00 468.88H469.73"/>
<rect x="132.90" y="185.05" width="49.47" height="101.29" fill="#fff"/>
<path fill="#fff" d="M0 0H472V472H0Z M1.00 1.32V470.06H469.73V1.32Z" fill-rule="evenodd"/>
<rect x="314.27" y="159.14" width="157.73" height="153.11" fill="#fff"/>
</svg>
<svg style="position:absolute;left:0;top:440px" width="60" height="70" viewBox="0 440 60 70"><path d="M8.6 471V495.6H35" stroke="#20a8b0" stroke-width="1.8" fill="none"/><path d="M6.2 475.4L8.8 471.3L12.3 475M29.6 492.7L35.4 495.6L29.2 498.5" stroke="#00ffff" stroke-width="1.7" fill="none"/><path d="M2.9 454L9 461.4L15.2 453.6M9 461.4V468M36.6 487L48.5 501.7M47.7 487L35.8 501.3" stroke="#00ffff" stroke-width="2.3" fill="none"/></svg>
<div style="position:absolute;left:547.5px;top:100.5px;width:21px;height:24.2px;background:#0000ff"></div>
<div style="position:absolute;left:547.5px;top:124.5px;width:21px;height:24.2px;background:#0050ff"></div>
<div style="position:absolute;left:547.5px;top:148.5px;width:21px;height:24.2px;background:#0096ff"></div>
<div style="position:absolute;left:547.5px;top:172.5px;width:21px;height:24.2px;background:#00ffff"></div>
<div style="position:absolute;left:547.5px;top:196.5px;width:21px;height:24.2px;background:#00ff96"></div>
<div style="position:absolute;left:547.5px;top:220.5px;width:21px;height:24.2px;background:#00ff00"></div>
<div style="position:absolute;left:547.5px;top:244.5px;width:21px;height:24.2px;background:#80ff00"></div>
<div class="lg" style="top:116.5px">150.</div>
<div class="lg" style="top:140.5px">137.</div>
<div class="lg" style="top:164.5px">124.</div>
<div class="lg" style="top:188.5px">111.</div>
<div class="lg" style="top:212.5px">98.</div>
<div class="lg" style="top:236.5px">85.</div>
<div class="lg" style="top:260.5px">72.</div>
<div class="e3">E-3</div>
<div id="dlg">
 <div class="a" style="left:0;top:0;width:537px;height:30px;background:#fff"></div>
 <div class="a" style="left:0;top:30px;width:537px;height:25px;background:linear-gradient(to right,#f0f0f0,#fbfbfb)"></div>
</div>
<svg class="a" style="left:350px;top:273px" width="16" height="16" viewBox="0 0 16 16"><rect width="16" height="16" fill="#0078d7"/><path d="M11.3 4.3C10.6 3.6 9.6 3.3 8.4 3.3C6.5 3.3 5 4.1 5 5.8C5 8.9 11.2 7.6 11.2 10.6C11.2 12.2 9.8 12.9 8 12.9C6.6 12.9 5.4 12.4 4.6 11.6" stroke="#fff" stroke-width="2.5" fill="none"/></svg>
<div class="a" style="left:372px;top:274px;font-size:11.6px;line-height:14px;color:#000">Concrete Shell Design 1 - Summary Data - Eurocode 2-2004</div>
<svg class="a" style="left:750px;top:270px" width="125" height="24" viewBox="0 0 125 24"><path d="M10 11.5H20" stroke="#000" stroke-width="1"/><rect x="55.5" y="6.5" width="9.5" height="9.5" fill="none" stroke="#000" stroke-width="1"/><path d="M100.5 6.5L110.5 16.5M110.5 6.5L100.5 16.5" stroke="#000" stroke-width="1.1"/></svg>
<div class="a" style="left:357px;top:302px;font-size:12px;line-height:14px;color:#000">File</div>
<div class="a" style="left:394px;top:302px;font-size:12px;line-height:14px;color:#000">View</div>
<div class="a" style="left:438px;top:302px;font-size:12px;line-height:14px;color:#000">Edit</div>
<div class="a" style="left:477px;top:302px;font-size:12px;line-height:14px;color:#000">Format-Filter-Sort</div>
<div class="a" style="left:591px;top:302px;font-size:12px;line-height:14px;color:#a0a0a0">Select</div>
<div class="a" style="left:641px;top:302px;font-size:12px;line-height:14px;color:#000">Options</div>
<div class="a" style="left:353px;top:326px;font-size:11px;line-height:14px">Units:</div>
<div class="a" style="left:385px;top:326px;font-size:11px;line-height:14px">As Noted</div>
<div class="a" style="left:353px;top:343px;font-size:11px;line-height:14px">Filter:</div>
<div class="a" style="left:456px;top:322px;width:422px;height:22px;background:#e5e5e5;border:1px solid #adadad"></div>
<div class="a" style="left:460px;top:326px;font-size:10.8px;line-height:14px">Concrete Shell Design 1 - Summary Data - Eurocode 2-2004</div>
<svg class="a" style="left:862px;top:328px" width="14" height="10" viewBox="0 0 14 10"><path d="M2.5 3L7 7.5L11.5 3" stroke="#333" stroke-width="1.1" fill="none"/></svg>
<div class="a" style="left:350px;top:366px;width:528px;height:318px;border:1px solid #000;background:#fff"></div>
<div class="a" style="left:391px;top:367px;width:1px;height:35px;background:#a0a0a0"></div>
<div class="a" style="left:468px;top:367px;width:1px;height:35px;background:#dcdcdc"></div>
<div class="a" style="left:545px;top:367px;width:1px;height:35px;background:#dcdcdc"></div>
<div class="a" style="left:622px;top:367px;width:1px;height:35px;background:#dcdcdc"></div>
<div class="a" style="left:699px;top:367px;width:1px;height:35px;background:#dcdcdc"></div>
<div class="a" style="left:776px;top:367px;width:1px;height:35px;background:#dcdcdc"></div>
<div class="a" style="left:853px;top:367px;width:1px;height:35px;background:#dcdcdc"></div>
<div class="a" style="left:351px;top:402px;width:509px;height:1px;background:#a0a0a0"></div>
<div class="a" style="left:351px;top:424px;width:40px;height:1px;background:#e3e3e3"></div>
<div class="a" style="left:391px;top:424px;width:469px;height:1px;background:#a0a0a0"></div>
<div class="a" style="left:391px;top:407px;width:77px;text-align:center;font-size:11px;line-height:14px">4</div>
<div class="a" style="left:468px;top:407px;width:77px;text-align:center;font-size:11px;line-height:14px">9</div>
<div class="a" style="left:545px;top:407px;width:77px;text-align:center;font-size:11px;line-height:14px">STR9</div>
<div class="a" style="left:622px;top:407px;width:72px;text-align:right;font-size:11px;line-height:14px">0.098</div>
<div class="a" style="left:699px;top:407px;width:72px;text-align:right;font-size:11px;line-height:14px">0.47</div>
<div class="a" style="left:776px;top:407px;width:72px;text-align:right;font-size:11px;line-height:14px">0</div>
<div class="a" style="left:351px;top:446px;width:40px;height:1px;background:#e3e3e3"></div>
<div class="a" style="left:391px;top:446px;width:469px;height:1px;background:#a0a0a0"></div>
<div class="a" style="left:391px;top:429px;width:77px;text-align:center;font-size:11px;line-height:14px">4</div>
<div class="a" style="left:468px;top:429px;width:77px;text-align:center;font-size:11px;line-height:14px">~1</div>
<div class="a" style="left:545px;top:429px;width:77px;text-align:center;font-size:11px;line-height:14px">STR9</div>
<div class="a" style="left:622px;top:429px;width:72px;text-align:right;font-size:11px;line-height:14px">0.093</div>
<div class="a" style="left:699px;top:429px;width:72px;text-align:right;font-size:11px;line-height:14px">0.453</div>
<div class="a" style="left:776px;top:429px;width:72px;text-align:right;font-size:11px;line-height:14px">0</div>
<div class="a" style="left:351px;top:468px;width:40px;height:1px;background:#e3e3e3"></div>
<div class="a" style="left:391px;top:468px;width:469px;height:1px;background:#a0a0a0"></div>
<div class="a" style="left:391px;top:451px;width:77px;text-align:center;font-size:11px;line-height:14px">4</div>
<div class="a" style="left:468px;top:451px;width:77px;text-align:center;font-size:11px;line-height:14px">~2</div>
<div class="a" style="left:545px;top:451px;width:77px;text-align:center;font-size:11px;line-height:14px">STR9</div>
<div class="a" style="left:622px;top:451px;width:72px;text-align:right;font-size:11px;line-height:14px">0.058</div>
<div class="a" style="left:699px;top:451px;width:72px;text-align:right;font-size:11px;line-height:14px">0.22</div>
<div class="a" style="left:776px;top:451px;width:72px;text-align:right;font-size:11px;line-height:14px">0</div>
<div class="a" style="left:351px;top:490px;width:40px;height:1px;background:#e3e3e3"></div>
<div class="a" style="left:391px;top:490px;width:469px;height:1px;background:#a0a0a0"></div>
<div class="a" style="left:391px;top:473px;width:77px;text-align:center;font-size:11px;line-height:14px">4</div>
<div class="a" style="left:468px;top:473px;width:77px;text-align:center;font-size:11px;line-height:14px">~3</div>
<div class="a" style="left:545px;top:473px;width:77px;text-align:center;font-size:11px;line-height:14px">STR9</div>
<div class="a" style="left:622px;top:473px;width:72px;text-align:right;font-size:11px;line-height:14px">0.064</div>
<div class="a" style="left:699px;top:473px;width:72px;text-align:right;font-size:11px;line-height:14px">0.235</div>
<div class="a" style="left:776px;top:473px;width:72px;text-align:right;font-size:11px;line-height:14px">0</div>
<div class="a" style="left:351px;top:512px;width:40px;height:1px;background:#e3e3e3"></div>
<div class="a" style="left:391px;top:512px;width:469px;height:1px;background:#a0a0a0"></div>
<div class="a" style="left:391px;top:495px;width:77px;text-align:center;font-size:11px;line-height:14px">4</div>
<div class="a" style="left:468px;top:495px;width:77px;text-align:center;font-size:11px;line-height:14px">~3</div>
<div class="a" style="left:545px;top:495px;width:77px;text-align:center;font-size:11px;line-height:14px">STR9</div>
<div class="a" style="left:622px;top:495px;width:72px;text-align:right;font-size:11px;line-height:14px">0.058</div>
<div class="a" style="left:699px;top:495px;width:72px;text-align:right;font-size:11px;line-height:14px">0.224</div>
<div class="a" style="left:776px;top:495px;width:72px;text-align:right;font-size:11px;line-height:14px">0</div>
<div class="a" style="left:351px;top:534px;width:40px;height:1px;background:#e3e3e3"></div>
<div class="a" style="left:391px;top:534px;width:469px;height:1px;background:#a0a0a0"></div>
<div class="a" style="left:391px;top:517px;width:77px;text-align:center;font-size:11px;line-height:14px">4</div>
<div class="a" style="left:468px;top:517px;width:77px;text-align:center;font-size:11px;line-height:14px">~2</div>
<div class="a" style="left:545px;top:517px;width:77px;text-align:center;font-size:11px;line-height:14px">STR9</div>
<div class="a" style="left:622px;top:517px;width:72px;text-align:right;font-size:11px;line-height:14px">0.058</div>
<div class="a" style="left:699px;top:517px;width:72px;text-align:right;font-size:11px;line-height:14px">0.222</div>
<div class="a" style="left:776px;top:517px;width:72px;text-align:right;font-size:11px;line-height:14px">0</div>
<div class="a" style="left:351px;top:556px;width:40px;height:1px;background:#e3e3e3"></div>
<div class="a" style="left:391px;top:556px;width:469px;height:1px;background:#a0a0a0"></div>
<div class="a" style="left:391px;top:539px;width:77px;text-align:center;font-size:11px;line-height:14px">4</div>
<div class="a" style="left:468px;top:539px;width:77px;text-align:center;font-size:11px;line-height:14px">~4</div>
<div class="a" style="left:545px;top:539px;width:77px;text-align:center;font-size:11px;line-height:14px">STR9</div>
<div class="a" style="left:622px;top:539px;width:72px;text-align:right;font-size:11px;line-height:14px">0.025</div>
<div class="a" style="left:699px;top:539px;width:72px;text-align:right;font-size:11px;line-height:14px">0.03</div>
<div class="a" style="left:776px;top:539px;width:72px;text-align:right;font-size:11px;line-height:14px">0.003936</div>
<div class="a" style="left:351px;top:578px;width:40px;height:1px;background:#e3e3e3"></div>
<div class="a" style="left:391px;top:578px;width:469px;height:1px;background:#a0a0a0"></div>
<div class="a" style="left:391px;top:561px;width:77px;text-align:center;font-size:11px;line-height:14px">4</div>
<div class="a" style="left:468px;top:561px;width:77px;text-align:center;font-size:11px;line-height:14px">~5</div>
<div class="a" style="left:545px;top:561px;width:77px;text-align:center;font-size:11px;line-height:14px">STR9</div>
<div class="a" style="left:622px;top:561px;width:72px;text-align:right;font-size:11px;line-height:14px">0.025</div>
<div class="a" style="left:699px;top:561px;width:72px;text-align:right;font-size:11px;line-height:14px">0.032</div>
<div class="a" style="left:776px;top:561px;width:72px;text-align:right;font-size:11px;line-height:14px">0.0009206</div>
<div class="a" style="left:351px;top:600px;width:40px;height:1px;background:#e3e3e3"></div>
<div class="a" style="left:391px;top:600px;width:469px;height:1px;background:#a0a0a0"></div>
<div class="a" style="left:391px;top:583px;width:77px;text-align:center;font-size:11px;line-height:14px">4</div>
<div class="a" style="left:468px;top:583px;width:77px;text-align:center;font-size:11px;line-height:14px">~5</div>
<div class="a" style="left:545px;top:583px;width:77px;text-align:center;font-size:11px;line-height:14px">STR9</div>
<div class="a" style="left:622px;top:583px;width:72px;text-align:right;font-size:11px;line-height:14px">0.023</div>
<div class="a" style="left:699px;top:583px;width:72px;text-align:right;font-size:11px;line-height:14px">0.031</div>
<div class="a" style="left:776px;top:583px;width:72px;text-align:right;font-size:11px;line-height:14px">0.001283</div>
<div class="a" style="left:351px;top:622px;width:40px;height:1px;background:#e3e3e3"></div>
<div class="a" style="left:391px;top:622px;width:469px;height:1px;background:#a0a0a0"></div>
<div class="a" style="left:391px;top:605px;width:77px;text-align:center;font-size:11px;line-height:14px">4</div>
<div class="a" style="left:468px;top:605px;width:77px;text-align:center;font-size:11px;line-height:14px">~4</div>
<div class="a" style="left:545px;top:605px;width:77px;text-align:center;font-size:11px;line-height:14px">STR9</div>
<div class="a" style="left:622px;top:605px;width:72px;text-align:right;font-size:11px;line-height:14px">0.026</div>
<div class="a" style="left:699px;top:605px;width:72px;text-align:right;font-size:11px;line-height:14px">0.027</div>
<div class="a" style="left:776px;top:605px;width:72px;text-align:right;font-size:11px;line-height:14px">0.004982</div>
<div class="a" style="left:351px;top:644px;width:40px;height:1px;background:#e3e3e3"></div>
<div class="a" style="left:391px;top:644px;width:469px;height:1px;background:#a0a0a0"></div>
<div class="a" style="left:391px;top:627px;width:77px;text-align:center;font-size:11px;line-height:14px">4</div>
<div class="a" style="left:468px;top:627px;width:77px;text-align:center;font-size:11px;line-height:14px">~6</div>
<div class="a" style="left:545px;top:627px;width:77px;text-align:center;font-size:11px;line-height:14px">STR9</div>
<div class="a" style="left:622px;top:627px;width:72px;text-align:right;font-size:11px;line-height:14px">0</div>
<div class="a" style="left:699px;top:627px;width:72px;text-align:right;font-size:11px;line-height:14px">0</div>
<div class="a" style="left:776px;top:627px;width:72px;text-align:right;font-size:11px;line-height:14px">0.054</div>
<div class="a" style="left:351px;top:666px;width:40px;height:1px;background:#e3e3e3"></div>
<div class="a" style="left:391px;top:666px;width:469px;height:1px;background:#a0a0a0"></div>
<div class="a" style="left:391px;top:649px;width:77px;text-align:center;font-size:11px;line-height:14px">4</div>
<div class="a" style="left:468px;top:649px;width:77px;text-align:center;font-size:11px;line-height:14px">~7</div>
<div class="a" style="left:545px;top:649px;width:77px;text-align:center;font-size:11px;line-height:14px">STR9</div>
<div class="a" style="left:622px;top:649px;width:72px;text-align:right;font-size:11px;line-height:14px">0</div>
<div class="a" style="left:699px;top:649px;width:72px;text-align:right;font-size:11px;line-height:14px">0</div>
<div class="a" style="left:776px;top:649px;width:72px;text-align:right;font-size:11px;line-height:14px">0.051</div>
<div class="a" style="left:391px;top:403px;width:1px;height:263px;background:#a0a0a0"></div>
<div class="a" style="left:468px;top:403px;width:1px;height:263px;background:#a0a0a0"></div>
<div class="a" style="left:545px;top:403px;width:1px;height:263px;background:#a0a0a0"></div>
<div class="a" style="left:622px;top:403px;width:1px;height:263px;background:#a0a0a0"></div>
<div class="a" style="left:699px;top:403px;width:1px;height:263px;background:#a0a0a0"></div>
<div class="a" style="left:776px;top:403px;width:1px;height:263px;background:#a0a0a0"></div>
<div class="a" style="left:853px;top:403px;width:1px;height:263px;background:#a0a0a0"></div>
<div class="a" style="left:391px;top:371px;width:60px;text-align:center;font-size:11px;font-weight:bold;line-height:14px">Area<br>Text</div>
<div class="a" style="left:468px;top:371px;width:60px;text-align:center;font-size:11px;font-weight:bold;line-height:14px">Joint<br>Text</div>
<div class="a" style="left:552px;top:371px;font-size:11px;font-weight:bold;line-height:14px">OutputCase</div>
<div class="a" style="left:622px;top:371px;width:60px;text-align:center;font-size:11px;font-weight:bold;line-height:14px">As1Top<br>mm</div>
<div class="a" style="left:699px;top:371px;width:60px;text-align:center;font-size:11px;font-weight:bold;line-height:14px">As2Top<br>mm</div>
<div class="a" style="left:776px;top:371px;width:60px;text-align:center;font-size:11px;font-weight:bold;line-height:14px">As1Bot<br>mm</div>
<div class="a" style="left:860px;top:367px;width:17px;height:316px;background:#f0f0f0"></div>
<div class="a" style="left:351px;top:666px;width:526px;height:17px;background:#f0f0f0"></div>
<div class="a" style="left:861px;top:384px;width:15px;height:17px;background:#cdcdcd"></div>
<div class="a" style="left:367px;top:667px;width:73px;height:15px;background:#cdcdcd"></div>
<svg class="a" style="left:860px;top:367px" width="17" height="299" viewBox="0 0 17 299"><path d="M5.4 11.2L8.6 7.6L11.8 11.2" stroke="#555" stroke-width="2.3" fill="none"/><path d="M5.4 289.2L8.6 292.8L11.8 289.2" stroke="#555" stroke-width="2.3" fill="none"/></svg>
<svg class="a" style="left:351px;top:666px" width="510" height="17" viewBox="0 0 510 17"><path d="M10.6 5.4L7 8.6L10.6 11.8" stroke="#555" stroke-width="2.3" fill="none"/><path d="M498.6 5.4L502.2 8.6L498.6 11.8" stroke="#555" stroke-width="2.3" fill="none"/></svg>
<div class="a" style="left:354px;top:697px;font-size:11px;line-height:14px">Record:</div>
<div class="a" style="left:404px;top:694px;width:34px;height:21px;background:#e1e1e1;border:1px solid #adadad;text-align:center;font-size:11px;line-height:19px">&lt;&lt;</div>
<div class="a" style="left:441px;top:694px;width:27px;height:21px;background:#e1e1e1;border:1px solid #adadad;text-align:center;font-size:11px;line-height:19px">&lt;</div>
<div class="a" style="left:532px;top:694px;width:27px;height:21px;background:#e1e1e1;border:1px solid #adadad;text-align:center;font-size:11px;line-height:19px">&gt;</div>
<div class="a" style="left:561px;top:694px;width:34px;height:21px;background:#e1e1e1;border:1px solid #adadad;text-align:center;font-size:11px;line-height:19px">&gt;&gt;</div>
<div class="a" style="left:625px;top:694px;width:112px;height:21px;background:#e1e1e1;border:1px solid #adadad;text-align:center;font-size:11px;line-height:19px">Add Tables...</div>
<div class="a" style="left:471px;top:697px;width:59px;height:14px;background:#fff"></div>
<div class="a" style="left:471px;top:697px;width:59px;text-align:center;font-size:11px;line-height:14px">1454</div>
<div class="a" style="left:601px;top:697px;font-size:11px;line-height:14px;width:24px;overflow:hidden">of 57</div>
<div class="a" style="left:781px;top:694px;width:71px;height:21px;background:#e1e1e1;border:2px solid #0078d7;text-align:center;font-size:11px;line-height:17px">Done</div>
<svg class="a" style="left:864px;top:714px" width="14" height="14" viewBox="0 0 14 14" fill="#b9b9b9"><rect x="10" y="2" width="2" height="2"/><rect x="6" y="6" width="2" height="2"/><rect x="10" y="6" width="2" height="2"/><rect x="2" y="10" width="2" height="2"/><rect x="6" y="10" width="2" height="2"/><rect x="10" y="10" width="2" height="2"/></svg>
</body></html>
